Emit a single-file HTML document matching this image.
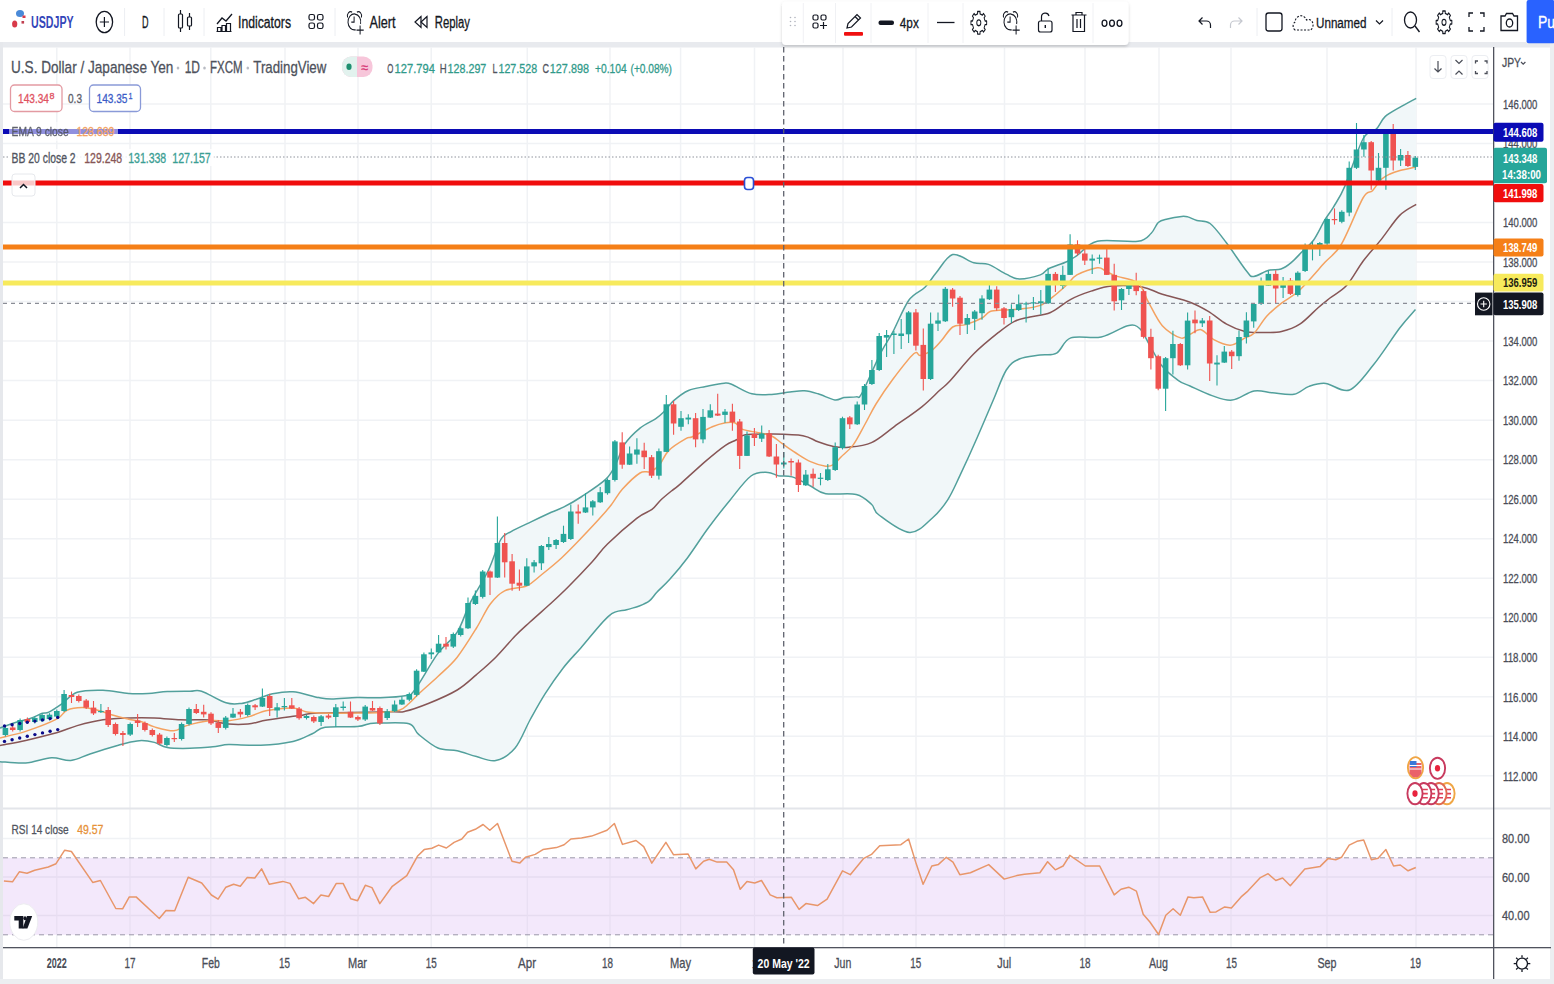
<!DOCTYPE html>
<html><head><meta charset="utf-8"><style>html,body{margin:0;padding:0;background:#fff;overflow:hidden;width:1554px;height:984px;}svg{display:block;}</style></head><body>
<svg width="1554" height="984" viewBox="0 0 1554 984" font-family='"Liberation Sans", sans-serif'>
<rect x="0" y="0" width="1554" height="984" fill="#ffffff"/>
<rect x="0" y="41.5" width="1554" height="6" fill="#e8eaee"/>
<rect x="0" y="42" width="3" height="942" fill="#e6e8ec"/>
<rect x="1550" y="42" width="4" height="942" fill="#eceef1"/>
<rect x="0" y="979" width="1554" height="5" fill="#eceef1"/>
<line x1="3" y1="104.0" x2="1493" y2="104.0" stroke="#f0f2f5" stroke-width="1.5"/>
<line x1="3" y1="143.5" x2="1493" y2="143.5" stroke="#f0f2f5" stroke-width="1.5"/>
<line x1="3" y1="183.0" x2="1493" y2="183.0" stroke="#f0f2f5" stroke-width="1.5"/>
<line x1="3" y1="222.6" x2="1493" y2="222.6" stroke="#f0f2f5" stroke-width="1.5"/>
<line x1="3" y1="262.1" x2="1493" y2="262.1" stroke="#f0f2f5" stroke-width="1.5"/>
<line x1="3" y1="301.6" x2="1493" y2="301.6" stroke="#f0f2f5" stroke-width="1.5"/>
<line x1="3" y1="341.1" x2="1493" y2="341.1" stroke="#f0f2f5" stroke-width="1.5"/>
<line x1="3" y1="380.6" x2="1493" y2="380.6" stroke="#f0f2f5" stroke-width="1.5"/>
<line x1="3" y1="420.2" x2="1493" y2="420.2" stroke="#f0f2f5" stroke-width="1.5"/>
<line x1="3" y1="459.7" x2="1493" y2="459.7" stroke="#f0f2f5" stroke-width="1.5"/>
<line x1="3" y1="499.2" x2="1493" y2="499.2" stroke="#f0f2f5" stroke-width="1.5"/>
<line x1="3" y1="538.7" x2="1493" y2="538.7" stroke="#f0f2f5" stroke-width="1.5"/>
<line x1="3" y1="578.2" x2="1493" y2="578.2" stroke="#f0f2f5" stroke-width="1.5"/>
<line x1="3" y1="617.8" x2="1493" y2="617.8" stroke="#f0f2f5" stroke-width="1.5"/>
<line x1="3" y1="657.3" x2="1493" y2="657.3" stroke="#f0f2f5" stroke-width="1.5"/>
<line x1="3" y1="696.8" x2="1493" y2="696.8" stroke="#f0f2f5" stroke-width="1.5"/>
<line x1="3" y1="736.3" x2="1493" y2="736.3" stroke="#f0f2f5" stroke-width="1.5"/>
<line x1="3" y1="775.8" x2="1493" y2="775.8" stroke="#f0f2f5" stroke-width="1.5"/>
<line x1="56.8" y1="47" x2="56.8" y2="947" stroke="#f0f2f5" stroke-width="1.5"/>
<line x1="130" y1="47" x2="130" y2="947" stroke="#f0f2f5" stroke-width="1.5"/>
<line x1="210.8" y1="47" x2="210.8" y2="947" stroke="#f0f2f5" stroke-width="1.5"/>
<line x1="285" y1="47" x2="285" y2="947" stroke="#f0f2f5" stroke-width="1.5"/>
<line x1="358" y1="47" x2="358" y2="947" stroke="#f0f2f5" stroke-width="1.5"/>
<line x1="431.2" y1="47" x2="431.2" y2="947" stroke="#f0f2f5" stroke-width="1.5"/>
<line x1="527.3" y1="47" x2="527.3" y2="947" stroke="#f0f2f5" stroke-width="1.5"/>
<line x1="610" y1="47" x2="610" y2="947" stroke="#f0f2f5" stroke-width="1.5"/>
<line x1="680.6" y1="47" x2="680.6" y2="947" stroke="#f0f2f5" stroke-width="1.5"/>
<line x1="754.5" y1="47" x2="754.5" y2="947" stroke="#f0f2f5" stroke-width="1.5"/>
<line x1="843" y1="47" x2="843" y2="947" stroke="#f0f2f5" stroke-width="1.5"/>
<line x1="916" y1="47" x2="916" y2="947" stroke="#f0f2f5" stroke-width="1.5"/>
<line x1="1004.5" y1="47" x2="1004.5" y2="947" stroke="#f0f2f5" stroke-width="1.5"/>
<line x1="1085" y1="47" x2="1085" y2="947" stroke="#f0f2f5" stroke-width="1.5"/>
<line x1="1159" y1="47" x2="1159" y2="947" stroke="#f0f2f5" stroke-width="1.5"/>
<line x1="1231" y1="47" x2="1231" y2="947" stroke="#f0f2f5" stroke-width="1.5"/>
<line x1="1327" y1="47" x2="1327" y2="947" stroke="#f0f2f5" stroke-width="1.5"/>
<line x1="1416" y1="47" x2="1416" y2="947" stroke="#f0f2f5" stroke-width="1.5"/>
<line x1="3" y1="838.5" x2="1493" y2="838.5" stroke="#f0f2f5" stroke-width="1.5"/>
<line x1="3" y1="877.0" x2="1493" y2="877.0" stroke="#f0f2f5" stroke-width="1.5"/>
<line x1="3" y1="915.5" x2="1493" y2="915.5" stroke="#f0f2f5" stroke-width="1.5"/>
<path d="M0.0,728.0 C2.8,727.0 11.9,723.6 17.0,722.0 C22.1,720.4 26.7,719.7 30.9,718.2 C35.1,716.8 39.3,714.3 42.3,713.3 C45.3,712.3 45.5,713.7 48.8,712.1 C52.0,710.5 57.1,707.1 61.8,703.8 C66.5,700.5 70.3,694.5 77.2,692.2 C84.1,689.9 94.4,690.0 103.0,690.2 C111.6,690.4 121.2,693.0 128.7,693.5 C136.2,694.0 141.6,693.8 148.0,693.5 C154.4,693.2 160.3,691.9 167.3,691.5 C174.3,691.1 184.3,691.2 190.0,691.2 C195.7,691.2 195.6,689.3 201.6,691.2 C207.6,693.1 219.3,700.8 226.0,702.8 C232.7,704.8 236.3,704.0 241.5,703.4 C246.7,702.8 251.8,700.6 257.0,699.0 C262.1,697.4 266.4,695.0 272.4,693.8 C278.4,692.6 285.3,691.2 293.0,691.8 C300.7,692.4 312.3,696.4 318.7,697.6 C325.1,698.8 325.2,699.0 331.6,699.0 C338.0,699.0 348.9,697.8 357.0,697.6 C365.1,697.4 372.0,698.1 380.0,697.8 C388.0,697.5 399.2,697.1 405.0,695.8 C410.8,694.5 409.2,697.1 414.7,690.0 C420.2,682.9 430.8,663.0 437.9,653.4 C445.0,643.8 451.8,640.5 457.2,632.1 C462.6,623.7 464.8,613.5 470.0,603.2 C475.2,592.9 483.2,581.0 488.3,570.5 C493.4,560.0 496.8,546.5 500.5,540.0 C504.2,533.5 505.6,534.8 510.7,531.8 C515.8,528.8 524.2,525.1 531.0,521.9 C537.8,518.6 545.9,514.8 551.3,512.3 C556.7,509.8 558.4,509.8 563.5,507.2 C568.6,504.6 574.7,501.2 581.8,496.5 C588.9,491.8 600.4,484.5 606.2,478.9 C612.0,473.3 613.4,468.4 616.4,462.7 C619.4,456.9 620.6,450.2 624.5,444.4 C628.4,438.6 634.8,432.4 640.0,428.1 C645.2,423.9 651.6,421.5 655.5,418.9 C659.4,416.3 660.3,415.4 663.4,412.3 C666.5,409.2 669.8,404.0 674.0,400.4 C678.2,396.8 683.2,392.8 688.5,390.5 C693.8,388.2 699.8,387.7 705.7,386.5 C711.7,385.3 719.8,383.5 724.2,383.2 C728.6,382.9 727.5,382.7 732.1,384.5 C736.7,386.3 745.3,392.2 751.9,393.8 C758.5,395.4 765.4,394.7 771.7,394.4 C778.1,394.1 784.5,392.6 790.0,392.0 C795.5,391.4 799.7,390.5 804.4,390.8 C809.1,391.1 813.0,392.3 818.1,393.8 C823.2,395.3 830.6,399.3 834.9,399.9 C839.2,400.5 840.5,398.1 844.0,397.6 C847.5,397.1 853.2,397.7 856.2,396.9 C859.2,396.1 857.9,400.4 862.0,393.0 C866.1,385.6 876.0,362.2 881.1,352.2 C886.2,342.1 887.9,341.4 892.5,332.7 C897.1,324.0 903.4,307.8 908.8,300.2 C914.2,292.6 920.4,291.8 925.0,287.2 C929.6,282.6 931.8,277.9 936.4,272.5 C941.0,267.1 946.5,256.2 952.7,254.6 C958.9,253.0 967.8,261.2 973.8,262.8 C979.8,264.4 983.1,262.5 988.5,264.4 C993.9,266.3 1001.2,271.7 1006.3,274.1 C1011.4,276.5 1013.6,278.9 1019.3,279.0 C1025.0,279.1 1035.4,276.6 1040.3,274.9 C1045.2,273.2 1044.1,271.0 1048.5,268.8 C1052.9,266.6 1062.0,263.9 1066.7,261.7 C1071.4,259.5 1071.8,259.0 1076.9,255.6 C1082.0,252.2 1087.0,243.7 1097.2,241.3 C1107.4,238.9 1128.9,242.7 1137.9,241.3 C1146.9,240.0 1147.8,236.3 1151.2,233.2 C1154.6,230.1 1155.6,224.9 1158.3,222.5 C1161.0,220.1 1163.5,220.0 1167.4,219.0 C1171.3,218.0 1178.3,216.8 1181.7,216.4 C1185.1,216.1 1185.3,216.2 1187.8,216.9 C1190.3,217.6 1193.2,219.4 1196.9,220.5 C1200.6,221.6 1205.2,219.8 1210.1,223.5 C1215.0,227.2 1220.3,234.8 1226.4,242.8 C1232.5,250.8 1242.1,265.7 1246.7,271.3 C1251.3,276.9 1250.1,276.6 1253.8,276.4 C1257.5,276.2 1264.2,271.4 1268.7,270.2 C1273.2,269.0 1277.2,270.3 1281.0,269.0 C1284.8,267.7 1287.7,265.5 1291.2,262.6 C1294.8,259.7 1298.6,255.2 1302.3,251.5 C1306.0,247.8 1309.8,245.5 1313.5,240.3 C1317.2,235.1 1321.4,225.8 1324.7,220.2 C1328.0,214.6 1330.2,212.5 1333.6,206.8 C1337.0,201.1 1340.0,197.5 1344.9,186.1 C1349.8,174.7 1358.0,147.9 1363.2,138.5 C1368.4,129.1 1372.3,133.1 1376.0,129.4 C1379.7,125.8 1381.1,120.3 1385.1,116.6 C1389.0,112.9 1394.5,110.5 1399.7,107.4 C1404.9,104.4 1413.5,99.8 1416.2,98.3 L1415.5,309.5 1415.5,309.5 C1412.9,312.6 1406.7,318.8 1399.7,328.0 C1392.7,337.2 1381.7,354.7 1373.3,365.0 C1364.9,375.3 1357.4,386.9 1349.5,390.0 C1341.6,393.1 1332.5,384.0 1325.7,383.4 C1319.0,382.8 1314.3,384.6 1309.0,386.4 C1303.7,388.2 1300.1,393.2 1294.0,394.3 C1287.9,395.4 1279.1,393.4 1272.4,392.8 C1265.7,392.2 1260.7,389.8 1254.0,391.0 C1247.3,392.2 1239.1,399.3 1232.1,400.1 C1225.1,400.9 1219.0,398.0 1212.0,395.6 C1205.0,393.2 1195.6,388.5 1190.0,386.0 C1184.4,383.5 1183.1,383.9 1178.5,380.6 C1173.9,377.3 1167.0,372.1 1162.3,366.3 C1157.6,360.5 1153.8,352.3 1150.1,346.0 C1146.4,339.7 1143.6,332.1 1139.9,328.7 C1136.2,325.3 1134.1,324.3 1127.7,325.7 C1121.3,327.1 1110.8,334.9 1101.3,336.9 C1091.8,338.9 1078.2,335.2 1070.8,337.9 C1063.3,340.6 1061.7,350.2 1056.6,353.1 C1051.5,356.0 1046.2,354.0 1040.0,355.0 C1033.8,356.0 1024.9,356.5 1019.3,359.0 C1013.7,361.5 1010.6,363.2 1006.3,370.0 C1002.0,376.8 998.2,388.7 993.3,400.0 C988.4,411.3 982.5,425.4 977.0,438.0 C971.5,450.6 964.9,465.1 960.0,475.4 C955.1,485.7 952.3,492.7 947.7,499.8 C943.1,506.9 938.8,512.5 932.4,518.0 C926.0,523.5 918.5,533.0 909.6,532.5 C900.7,532.0 885.4,519.7 879.0,515.0 C872.6,510.3 875.3,507.7 871.5,504.3 C867.7,500.9 863.8,496.2 856.2,494.4 C848.6,492.6 833.3,495.1 825.7,493.7 C818.1,492.3 816.1,488.8 810.5,486.0 C804.9,483.2 797.6,478.6 792.2,476.9 C786.8,475.2 782.4,476.4 778.3,475.7 C774.2,474.9 772.3,472.3 767.8,472.4 C763.2,472.4 757.3,471.4 751.0,476.0 C744.7,480.6 737.2,491.4 730.0,500.2 C722.8,508.9 715.0,518.9 707.9,528.5 C700.8,538.1 694.0,549.2 687.6,557.7 C681.2,566.2 674.9,573.6 669.8,579.3 C664.7,585.0 660.5,588.4 657.1,592.0 C653.7,595.6 652.4,598.6 649.4,600.9 C646.4,603.2 643.1,604.5 639.3,606.0 C635.5,607.5 631.6,608.2 626.6,609.8 C621.6,611.4 616.6,609.4 609.0,615.8 C601.4,622.1 588.5,639.2 580.8,647.9 C573.1,656.6 568.9,660.6 563.0,668.2 C557.1,675.8 550.7,685.0 545.2,693.6 C539.7,702.2 535.0,710.9 530.0,720.0 C525.0,729.1 520.8,741.2 515.1,748.0 C509.4,754.8 502.2,759.1 495.8,760.5 C489.4,761.9 482.9,758.2 476.5,756.6 C470.1,755.0 463.6,752.2 457.2,750.8 C450.8,749.4 444.3,750.7 437.9,748.0 C431.5,745.3 423.4,738.4 418.6,734.4 C413.8,730.4 415.4,725.7 409.0,723.8 C402.6,721.9 386.5,723.1 380.0,723.0 C373.5,722.9 374.0,722.8 370.2,723.4 C366.4,724.0 364.8,726.0 357.3,726.6 C349.8,727.2 332.6,726.0 325.1,727.2 C317.6,728.4 317.7,731.3 312.3,733.7 C306.9,736.1 301.6,739.5 293.0,741.4 C284.4,743.3 271.5,744.7 260.8,745.2 C250.1,745.7 236.1,744.4 228.6,744.6 C221.1,744.8 222.1,745.9 215.7,746.5 C209.3,747.1 198.1,748.1 190.0,748.3 C181.9,748.5 173.2,748.5 167.3,747.5 C161.4,746.5 158.7,743.6 154.4,742.4 C150.1,741.2 145.9,740.4 141.6,740.4 C137.3,740.4 133.0,741.5 128.7,742.4 C124.4,743.3 122.2,744.1 115.8,746.0 C109.3,747.9 97.5,751.6 90.0,754.0 C82.5,756.4 77.2,759.8 70.8,760.4 C64.4,761.0 59.0,757.4 51.5,757.8 C44.0,758.2 34.3,762.4 25.7,763.0 C17.1,763.6 4.3,761.9 0.0,761.7 Z" fill="#f1f7f9" stroke="none"/>
<path d="M0.0,728.0 C2.8,727.0 11.9,723.6 17.0,722.0 C22.1,720.4 26.7,719.7 30.9,718.2 C35.1,716.8 39.3,714.3 42.3,713.3 C45.3,712.3 45.5,713.7 48.8,712.1 C52.0,710.5 57.1,707.1 61.8,703.8 C66.5,700.5 70.3,694.5 77.2,692.2 C84.1,689.9 94.4,690.0 103.0,690.2 C111.6,690.4 121.2,693.0 128.7,693.5 C136.2,694.0 141.6,693.8 148.0,693.5 C154.4,693.2 160.3,691.9 167.3,691.5 C174.3,691.1 184.3,691.2 190.0,691.2 C195.7,691.2 195.6,689.3 201.6,691.2 C207.6,693.1 219.3,700.8 226.0,702.8 C232.7,704.8 236.3,704.0 241.5,703.4 C246.7,702.8 251.8,700.6 257.0,699.0 C262.1,697.4 266.4,695.0 272.4,693.8 C278.4,692.6 285.3,691.2 293.0,691.8 C300.7,692.4 312.3,696.4 318.7,697.6 C325.1,698.8 325.2,699.0 331.6,699.0 C338.0,699.0 348.9,697.8 357.0,697.6 C365.1,697.4 372.0,698.1 380.0,697.8 C388.0,697.5 399.2,697.1 405.0,695.8 C410.8,694.5 409.2,697.1 414.7,690.0 C420.2,682.9 430.8,663.0 437.9,653.4 C445.0,643.8 451.8,640.5 457.2,632.1 C462.6,623.7 464.8,613.5 470.0,603.2 C475.2,592.9 483.2,581.0 488.3,570.5 C493.4,560.0 496.8,546.5 500.5,540.0 C504.2,533.5 505.6,534.8 510.7,531.8 C515.8,528.8 524.2,525.1 531.0,521.9 C537.8,518.6 545.9,514.8 551.3,512.3 C556.7,509.8 558.4,509.8 563.5,507.2 C568.6,504.6 574.7,501.2 581.8,496.5 C588.9,491.8 600.4,484.5 606.2,478.9 C612.0,473.3 613.4,468.4 616.4,462.7 C619.4,456.9 620.6,450.2 624.5,444.4 C628.4,438.6 634.8,432.4 640.0,428.1 C645.2,423.9 651.6,421.5 655.5,418.9 C659.4,416.3 660.3,415.4 663.4,412.3 C666.5,409.2 669.8,404.0 674.0,400.4 C678.2,396.8 683.2,392.8 688.5,390.5 C693.8,388.2 699.8,387.7 705.7,386.5 C711.7,385.3 719.8,383.5 724.2,383.2 C728.6,382.9 727.5,382.7 732.1,384.5 C736.7,386.3 745.3,392.2 751.9,393.8 C758.5,395.4 765.4,394.7 771.7,394.4 C778.1,394.1 784.5,392.6 790.0,392.0 C795.5,391.4 799.7,390.5 804.4,390.8 C809.1,391.1 813.0,392.3 818.1,393.8 C823.2,395.3 830.6,399.3 834.9,399.9 C839.2,400.5 840.5,398.1 844.0,397.6 C847.5,397.1 853.2,397.7 856.2,396.9 C859.2,396.1 857.9,400.4 862.0,393.0 C866.1,385.6 876.0,362.2 881.1,352.2 C886.2,342.1 887.9,341.4 892.5,332.7 C897.1,324.0 903.4,307.8 908.8,300.2 C914.2,292.6 920.4,291.8 925.0,287.2 C929.6,282.6 931.8,277.9 936.4,272.5 C941.0,267.1 946.5,256.2 952.7,254.6 C958.9,253.0 967.8,261.2 973.8,262.8 C979.8,264.4 983.1,262.5 988.5,264.4 C993.9,266.3 1001.2,271.7 1006.3,274.1 C1011.4,276.5 1013.6,278.9 1019.3,279.0 C1025.0,279.1 1035.4,276.6 1040.3,274.9 C1045.2,273.2 1044.1,271.0 1048.5,268.8 C1052.9,266.6 1062.0,263.9 1066.7,261.7 C1071.4,259.5 1071.8,259.0 1076.9,255.6 C1082.0,252.2 1087.0,243.7 1097.2,241.3 C1107.4,238.9 1128.9,242.7 1137.9,241.3 C1146.9,240.0 1147.8,236.3 1151.2,233.2 C1154.6,230.1 1155.6,224.9 1158.3,222.5 C1161.0,220.1 1163.5,220.0 1167.4,219.0 C1171.3,218.0 1178.3,216.8 1181.7,216.4 C1185.1,216.1 1185.3,216.2 1187.8,216.9 C1190.3,217.6 1193.2,219.4 1196.9,220.5 C1200.6,221.6 1205.2,219.8 1210.1,223.5 C1215.0,227.2 1220.3,234.8 1226.4,242.8 C1232.5,250.8 1242.1,265.7 1246.7,271.3 C1251.3,276.9 1250.1,276.6 1253.8,276.4 C1257.5,276.2 1264.2,271.4 1268.7,270.2 C1273.2,269.0 1277.2,270.3 1281.0,269.0 C1284.8,267.7 1287.7,265.5 1291.2,262.6 C1294.8,259.7 1298.6,255.2 1302.3,251.5 C1306.0,247.8 1309.8,245.5 1313.5,240.3 C1317.2,235.1 1321.4,225.8 1324.7,220.2 C1328.0,214.6 1330.2,212.5 1333.6,206.8 C1337.0,201.1 1340.0,197.5 1344.9,186.1 C1349.8,174.7 1358.0,147.9 1363.2,138.5 C1368.4,129.1 1372.3,133.1 1376.0,129.4 C1379.7,125.8 1381.1,120.3 1385.1,116.6 C1389.0,112.9 1394.5,110.5 1399.7,107.4 C1404.9,104.4 1413.5,99.8 1416.2,98.3" fill="none" stroke="#52a09c" stroke-width="1.5" stroke-linejoin="round"/>
<path d="M0.0,761.7 C4.3,761.9 17.1,763.6 25.7,763.0 C34.3,762.4 44.0,758.2 51.5,757.8 C59.0,757.4 64.4,761.0 70.8,760.4 C77.2,759.8 82.5,756.4 90.0,754.0 C97.5,751.6 109.3,747.9 115.8,746.0 C122.2,744.1 124.4,743.3 128.7,742.4 C133.0,741.5 137.3,740.4 141.6,740.4 C145.9,740.4 150.1,741.2 154.4,742.4 C158.7,743.6 161.4,746.5 167.3,747.5 C173.2,748.5 181.9,748.5 190.0,748.3 C198.1,748.1 209.3,747.1 215.7,746.5 C222.1,745.9 221.1,744.8 228.6,744.6 C236.1,744.4 250.1,745.7 260.8,745.2 C271.5,744.7 284.4,743.3 293.0,741.4 C301.6,739.5 306.9,736.1 312.3,733.7 C317.7,731.3 317.6,728.4 325.1,727.2 C332.6,726.0 349.8,727.2 357.3,726.6 C364.8,726.0 366.4,724.0 370.2,723.4 C374.0,722.8 373.5,722.9 380.0,723.0 C386.5,723.1 402.6,721.9 409.0,723.8 C415.4,725.7 413.8,730.4 418.6,734.4 C423.4,738.4 431.5,745.3 437.9,748.0 C444.3,750.7 450.8,749.4 457.2,750.8 C463.6,752.2 470.1,755.0 476.5,756.6 C482.9,758.2 489.4,761.9 495.8,760.5 C502.2,759.1 509.4,754.8 515.1,748.0 C520.8,741.2 525.0,729.1 530.0,720.0 C535.0,710.9 539.7,702.2 545.2,693.6 C550.7,685.0 557.1,675.8 563.0,668.2 C568.9,660.6 573.1,656.6 580.8,647.9 C588.5,639.2 601.4,622.1 609.0,615.8 C616.6,609.4 621.6,611.4 626.6,609.8 C631.6,608.2 635.5,607.5 639.3,606.0 C643.1,604.5 646.4,603.2 649.4,600.9 C652.4,598.6 653.7,595.6 657.1,592.0 C660.5,588.4 664.7,585.0 669.8,579.3 C674.9,573.6 681.2,566.2 687.6,557.7 C694.0,549.2 700.8,538.1 707.9,528.5 C715.0,518.9 722.8,508.9 730.0,500.2 C737.2,491.4 744.7,480.6 751.0,476.0 C757.3,471.4 763.2,472.4 767.8,472.4 C772.3,472.3 774.2,474.9 778.3,475.7 C782.4,476.4 786.8,475.2 792.2,476.9 C797.6,478.6 804.9,483.2 810.5,486.0 C816.1,488.8 818.1,492.3 825.7,493.7 C833.3,495.1 848.6,492.6 856.2,494.4 C863.8,496.2 867.7,500.9 871.5,504.3 C875.3,507.7 872.6,510.3 879.0,515.0 C885.4,519.7 900.7,532.0 909.6,532.5 C918.5,533.0 926.0,523.5 932.4,518.0 C938.8,512.5 943.1,506.9 947.7,499.8 C952.3,492.7 955.1,485.7 960.0,475.4 C964.9,465.1 971.5,450.6 977.0,438.0 C982.5,425.4 988.4,411.3 993.3,400.0 C998.2,388.7 1002.0,376.8 1006.3,370.0 C1010.6,363.2 1013.7,361.5 1019.3,359.0 C1024.9,356.5 1033.8,356.0 1040.0,355.0 C1046.2,354.0 1051.5,356.0 1056.6,353.1 C1061.7,350.2 1063.3,340.6 1070.8,337.9 C1078.2,335.2 1091.8,338.9 1101.3,336.9 C1110.8,334.9 1121.3,327.1 1127.7,325.7 C1134.1,324.3 1136.2,325.3 1139.9,328.7 C1143.6,332.1 1146.4,339.7 1150.1,346.0 C1153.8,352.3 1157.6,360.5 1162.3,366.3 C1167.0,372.1 1173.9,377.3 1178.5,380.6 C1183.1,383.9 1184.4,383.5 1190.0,386.0 C1195.6,388.5 1205.0,393.2 1212.0,395.6 C1219.0,398.0 1225.1,400.9 1232.1,400.1 C1239.1,399.3 1247.3,392.2 1254.0,391.0 C1260.7,389.8 1265.7,392.2 1272.4,392.8 C1279.1,393.4 1287.9,395.4 1294.0,394.3 C1300.1,393.2 1303.7,388.2 1309.0,386.4 C1314.3,384.6 1319.0,382.8 1325.7,383.4 C1332.5,384.0 1341.6,393.1 1349.5,390.0 C1357.4,386.9 1364.9,375.3 1373.3,365.0 C1381.7,354.7 1392.7,337.2 1399.7,328.0 C1406.7,318.8 1412.9,312.6 1415.5,309.5" fill="none" stroke="#52a09c" stroke-width="1.5" stroke-linejoin="round"/>
<path d="M0.0,745.6 C4.3,744.7 16.3,742.5 25.7,740.4 C35.1,738.2 48.0,735.2 56.6,732.7 C65.2,730.2 69.5,727.8 77.2,725.6 C84.9,723.5 94.4,721.1 103.0,719.8 C111.6,718.5 120.1,718.2 128.7,717.9 C137.3,717.6 145.8,717.6 154.4,717.9 C163.0,718.2 172.6,719.5 180.2,719.8 C187.8,720.1 195.2,719.8 200.0,719.8 C204.8,719.8 204.5,719.4 209.3,720.1 C214.1,720.8 222.2,723.4 228.6,724.0 C235.0,724.6 241.5,724.6 247.9,724.0 C254.3,723.4 258.6,721.5 267.2,720.1 C275.8,718.7 290.8,716.8 299.4,715.6 C308.0,714.4 303.6,713.6 318.7,713.0 C333.8,712.4 375.6,712.1 390.0,711.8 C404.4,711.5 398.6,712.7 405.0,711.3 C411.4,709.9 419.6,707.0 428.3,703.5 C437.0,700.0 449.2,694.8 457.2,690.0 C465.2,685.2 470.1,680.1 476.5,674.6 C482.9,669.1 489.4,663.6 495.8,657.2 C502.2,650.8 509.4,641.9 515.1,636.0 C520.8,630.1 524.0,627.5 530.0,622.0 C536.0,616.5 544.9,608.8 551.3,603.0 C557.6,597.2 561.3,593.8 568.1,587.0 C574.9,580.2 585.4,569.2 592.0,562.0 C598.6,554.8 600.0,551.3 607.5,544.0 C615.0,536.7 629.3,524.1 636.7,518.3 C644.1,512.5 648.0,512.4 652.0,509.4 C656.0,506.3 657.4,503.2 660.8,500.0 C664.2,496.8 669.2,492.8 672.3,490.3 C675.4,487.8 673.7,489.8 679.3,484.9 C684.9,480.0 698.0,467.7 705.7,461.1 C713.4,454.5 720.4,448.8 725.5,445.3 C730.6,441.8 732.8,441.8 736.1,440.0 C739.4,438.2 739.4,435.7 745.3,434.7 C751.2,433.7 762.1,433.8 771.7,434.0 C781.3,434.2 795.2,434.4 802.9,435.7 C810.6,437.0 813.0,440.0 818.1,441.8 C823.2,443.6 828.3,445.5 833.4,446.4 C838.5,447.3 842.2,447.8 848.6,447.2 C855.0,446.6 863.9,446.0 871.5,442.6 C879.1,439.2 885.9,432.6 894.3,426.6 C902.7,420.6 914.2,412.9 921.8,406.8 C929.4,400.7 935.4,394.2 940.0,390.0 C944.6,385.8 943.8,387.5 949.4,381.5 C955.0,375.5 965.7,361.9 973.8,353.8 C981.9,345.7 991.4,338.1 998.2,332.7 C1005.0,327.3 1009.2,323.9 1014.5,321.3 C1019.8,318.7 1024.0,318.5 1030.0,317.0 C1036.0,315.5 1043.7,315.4 1050.5,312.5 C1057.3,309.6 1064.0,302.9 1070.8,299.3 C1077.6,295.7 1084.3,293.3 1091.1,291.1 C1097.9,288.9 1103.0,286.7 1111.5,286.0 C1120.0,285.3 1133.5,285.6 1142.0,287.0 C1150.5,288.4 1154.3,291.7 1162.3,294.2 C1170.3,296.7 1182.3,299.3 1190.0,302.2 C1197.7,305.1 1202.2,307.7 1208.3,311.4 C1214.4,315.1 1220.5,320.8 1226.6,324.2 C1232.7,327.6 1238.8,330.1 1244.9,331.5 C1251.0,332.9 1257.1,332.4 1263.2,332.4 C1269.3,332.4 1275.4,332.9 1281.5,331.5 C1287.6,330.1 1293.7,328.2 1299.8,324.2 C1305.9,320.2 1313.1,312.1 1318.1,307.7 C1323.1,303.3 1325.2,301.8 1330.0,298.0 C1334.8,294.2 1341.5,291.2 1347.0,285.0 C1352.5,278.8 1357.5,268.6 1363.2,261.0 C1369.0,253.3 1375.4,246.7 1381.5,239.1 C1387.6,231.5 1393.9,221.2 1399.7,215.4 C1405.5,209.6 1413.5,206.2 1416.2,204.4" fill="none" stroke="#875656" stroke-width="1.5" stroke-linejoin="round"/>
<path d="M0.0,737.9 C4.3,736.8 16.3,734.5 25.7,731.4 C35.1,728.3 49.7,722.7 56.6,719.2 C63.5,715.7 62.6,712.1 66.9,710.2 C71.2,708.3 77.2,707.6 82.4,707.6 C87.6,707.6 92.7,708.9 97.8,710.2 C102.9,711.5 108.2,713.8 113.3,715.3 C118.4,716.8 124.0,718.1 128.7,719.2 C133.4,720.3 137.3,720.5 141.6,721.8 C145.9,723.1 149.1,725.4 154.4,726.9 C159.8,728.4 168.3,731.0 173.7,730.8 C179.1,730.6 180.7,727.3 186.6,725.6 C192.5,723.9 202.3,721.6 209.3,720.8 C216.3,720.0 222.2,721.4 228.6,720.8 C235.0,720.1 241.5,718.6 247.9,716.9 C254.3,715.2 259.7,712.0 267.2,710.5 C274.7,709.0 286.6,707.8 293.0,708.0 C299.4,708.2 301.5,711.0 305.8,711.8 C310.1,712.6 310.1,712.8 318.7,713.0 C327.3,713.2 347.1,713.1 357.3,713.0 C367.5,712.9 373.0,713.0 380.0,712.5 C387.0,712.0 394.5,711.8 399.3,710.3 C404.1,708.8 405.8,706.2 409.0,703.5 C412.2,700.8 413.8,698.4 418.6,693.9 C423.4,689.4 431.5,682.6 437.9,676.5 C444.3,670.4 450.8,665.3 457.2,657.2 C463.6,649.1 471.0,636.9 476.5,628.0 C482.0,619.1 485.6,610.2 490.3,604.0 C495.0,597.8 498.5,593.8 504.6,590.8 C510.7,587.8 520.8,588.3 526.9,585.7 C533.0,583.1 535.4,579.6 541.2,575.0 C547.0,570.4 554.9,564.1 561.5,558.0 C568.1,551.9 574.0,545.7 580.8,538.6 C587.6,531.5 597.0,521.5 602.2,515.6 C607.5,509.7 608.9,507.8 612.3,503.4 C615.7,499.0 617.9,494.2 622.5,489.1 C627.1,484.0 635.4,475.9 640.0,473.0 C644.6,470.1 647.0,473.0 650.2,471.7 C653.4,470.4 656.3,468.6 659.4,465.1 C662.5,461.6 664.3,455.0 668.7,450.6 C673.1,446.2 681.9,441.0 685.9,438.7 C689.9,436.4 688.1,438.7 692.5,436.7 C696.9,434.7 706.8,429.1 712.3,426.8 C717.8,424.5 721.8,423.5 725.5,422.8 C729.2,422.1 731.8,421.7 734.7,422.8 C737.6,423.9 738.7,427.8 742.7,429.4 C746.7,431.0 753.7,431.6 758.5,432.7 C763.3,433.8 767.8,434.2 771.7,436.0 C775.6,437.8 778.1,440.6 782.0,443.4 C785.9,446.1 790.5,449.5 795.2,452.5 C800.0,455.5 805.4,459.3 810.5,461.6 C815.6,463.9 821.9,465.7 825.7,466.2 C829.5,466.7 830.9,466.2 833.4,464.7 C835.9,463.2 837.7,460.3 841.0,457.0 C844.3,453.7 849.1,450.5 853.2,444.9 C857.3,439.3 861.6,430.3 865.4,423.5 C869.2,416.7 871.5,411.3 876.0,404.0 C880.5,396.7 886.2,388.2 892.5,379.8 C898.8,371.4 909.1,357.9 913.7,353.8 C918.3,349.7 917.2,355.9 920.2,355.4 C923.2,354.9 928.0,353.0 931.5,350.6 C935.0,348.2 937.8,344.7 941.3,340.8 C944.8,336.9 948.6,329.7 952.7,327.0 C956.8,324.3 960.8,326.1 965.7,324.6 C970.6,323.1 977.9,320.2 982.0,318.0 C986.1,315.8 986.6,312.8 990.1,311.5 C993.6,310.2 997.7,310.4 1003.1,310.0 C1008.5,309.6 1016.4,309.6 1022.6,308.8 C1028.8,308.0 1035.3,307.3 1040.3,305.4 C1045.3,303.5 1048.1,300.6 1052.5,297.2 C1056.9,293.8 1062.6,288.7 1066.7,285.0 C1070.8,281.3 1071.8,277.8 1076.9,274.9 C1082.0,272.0 1092.5,268.5 1097.2,267.8 C1102.0,267.1 1102.4,269.5 1105.4,270.8 C1108.5,272.1 1110.1,273.9 1115.5,275.9 C1120.9,277.9 1132.5,278.8 1137.9,283.0 C1143.3,287.2 1143.9,294.2 1148.0,301.3 C1152.1,308.4 1156.9,319.6 1162.3,325.7 C1167.7,331.8 1176.0,336.5 1180.6,337.9 C1185.2,339.3 1186.6,335.7 1190.0,334.3 C1193.4,332.9 1197.0,328.8 1201.0,329.7 C1205.0,330.6 1208.9,337.1 1213.8,339.7 C1218.7,342.3 1225.1,345.5 1230.3,345.2 C1235.5,344.9 1241.0,339.9 1244.9,337.9 C1248.9,335.9 1250.3,336.9 1254.0,333.3 C1257.7,329.7 1262.3,321.0 1266.9,316.0 C1271.5,311.0 1276.0,307.4 1281.5,303.1 C1287.0,298.8 1292.6,296.8 1299.8,290.0 C1307.0,283.2 1317.8,270.3 1324.7,262.6 C1331.7,254.9 1335.1,254.8 1341.5,244.0 C1347.9,233.2 1357.8,206.9 1363.0,198.0 C1368.2,189.1 1369.5,193.8 1372.5,190.7 C1375.5,187.6 1378.1,182.3 1381.0,179.5 C1383.9,176.7 1386.8,175.5 1390.0,174.0 C1393.2,172.5 1395.7,171.7 1400.0,170.5 C1404.3,169.3 1413.3,167.6 1416.0,167.0" fill="none" stroke="#f4a261" stroke-width="1.5" stroke-linejoin="round"/>
<line x1="5.4" y1="726.5" x2="5.4" y2="736.5" stroke="#26a69a" stroke-width="1.1"/>
<rect x="2.6" y="728.0" width="5.6" height="7.0" fill="#26a69a"/>
<line x1="12.7" y1="726.0" x2="12.7" y2="731.5" stroke="#ef5350" stroke-width="1.1"/>
<rect x="9.9" y="727.5" width="5.6" height="2.5" fill="#ef5350"/>
<line x1="20.1" y1="718.5" x2="20.1" y2="731.5" stroke="#26a69a" stroke-width="1.1"/>
<rect x="17.3" y="720.0" width="5.6" height="10.0" fill="#26a69a"/>
<line x1="27.4" y1="717.5" x2="27.4" y2="723.5" stroke="#ef5350" stroke-width="1.1"/>
<rect x="24.6" y="719.0" width="5.6" height="3.0" fill="#ef5350"/>
<line x1="34.8" y1="716.5" x2="34.8" y2="723.5" stroke="#26a69a" stroke-width="1.1"/>
<rect x="32.0" y="718.0" width="5.6" height="4.0" fill="#26a69a"/>
<line x1="42.1" y1="713.5" x2="42.1" y2="722.0" stroke="#26a69a" stroke-width="1.1"/>
<rect x="39.3" y="715.0" width="5.6" height="5.5" fill="#26a69a"/>
<line x1="49.5" y1="713.2" x2="49.5" y2="720.5" stroke="#26a69a" stroke-width="1.1"/>
<rect x="46.7" y="714.7" width="5.6" height="4.3" fill="#26a69a"/>
<line x1="56.8" y1="709.5" x2="56.8" y2="718.1" stroke="#26a69a" stroke-width="1.1"/>
<rect x="54.0" y="711.0" width="5.6" height="5.6" fill="#26a69a"/>
<line x1="64.1" y1="690.0" x2="64.1" y2="712.0" stroke="#26a69a" stroke-width="1.1"/>
<rect x="61.3" y="694.0" width="5.6" height="17.0" fill="#26a69a"/>
<line x1="71.5" y1="691.5" x2="71.5" y2="703.0" stroke="#ef5350" stroke-width="1.1"/>
<rect x="68.7" y="695.0" width="5.6" height="2.0" fill="#ef5350"/>
<line x1="78.8" y1="694.5" x2="78.8" y2="702.5" stroke="#ef5350" stroke-width="1.1"/>
<rect x="76.0" y="696.0" width="5.6" height="5.0" fill="#ef5350"/>
<line x1="86.2" y1="699.0" x2="86.2" y2="709.1" stroke="#ef5350" stroke-width="1.1"/>
<rect x="83.4" y="700.5" width="5.6" height="7.1" fill="#ef5350"/>
<line x1="93.5" y1="701.0" x2="93.5" y2="715.0" stroke="#ef5350" stroke-width="1.1"/>
<rect x="90.7" y="707.6" width="5.6" height="5.8" fill="#ef5350"/>
<line x1="100.9" y1="704.0" x2="100.9" y2="713.0" stroke="#26a69a" stroke-width="1.1"/>
<rect x="98.1" y="711.0" width="5.6" height="1.2" fill="#26a69a"/>
<line x1="108.2" y1="707.0" x2="108.2" y2="727.0" stroke="#ef5350" stroke-width="1.1"/>
<rect x="105.4" y="710.0" width="5.6" height="15.0" fill="#ef5350"/>
<line x1="115.5" y1="722.5" x2="115.5" y2="735.5" stroke="#ef5350" stroke-width="1.1"/>
<rect x="112.7" y="724.0" width="5.6" height="10.0" fill="#ef5350"/>
<line x1="122.9" y1="731.0" x2="122.9" y2="746.0" stroke="#ef5350" stroke-width="1.1"/>
<rect x="120.1" y="733.0" width="5.6" height="2.0" fill="#ef5350"/>
<line x1="130.2" y1="722.5" x2="130.2" y2="736.1" stroke="#26a69a" stroke-width="1.1"/>
<rect x="127.4" y="724.0" width="5.6" height="10.6" fill="#26a69a"/>
<line x1="137.6" y1="714.0" x2="137.6" y2="727.0" stroke="#ef5350" stroke-width="1.1"/>
<rect x="134.8" y="720.5" width="5.6" height="2.5" fill="#ef5350"/>
<line x1="144.9" y1="721.5" x2="144.9" y2="731.5" stroke="#ef5350" stroke-width="1.1"/>
<rect x="142.1" y="723.0" width="5.6" height="7.0" fill="#ef5350"/>
<line x1="152.3" y1="728.5" x2="152.3" y2="736.5" stroke="#ef5350" stroke-width="1.1"/>
<rect x="149.5" y="730.0" width="5.6" height="5.0" fill="#ef5350"/>
<line x1="159.6" y1="733.1" x2="159.6" y2="745.1" stroke="#ef5350" stroke-width="1.1"/>
<rect x="156.8" y="734.6" width="5.6" height="9.0" fill="#ef5350"/>
<line x1="166.9" y1="736.5" x2="166.9" y2="746.5" stroke="#26a69a" stroke-width="1.1"/>
<rect x="164.1" y="738.0" width="5.6" height="7.0" fill="#26a69a"/>
<line x1="174.3" y1="733.0" x2="174.3" y2="742.0" stroke="#ef5350" stroke-width="1.1"/>
<rect x="171.5" y="738.0" width="5.6" height="1.2" fill="#ef5350"/>
<line x1="181.6" y1="722.5" x2="181.6" y2="740.5" stroke="#26a69a" stroke-width="1.1"/>
<rect x="178.8" y="724.0" width="5.6" height="15.0" fill="#26a69a"/>
<line x1="189.0" y1="707.5" x2="189.0" y2="725.5" stroke="#26a69a" stroke-width="1.1"/>
<rect x="186.2" y="709.0" width="5.6" height="15.0" fill="#26a69a"/>
<line x1="196.3" y1="704.0" x2="196.3" y2="714.0" stroke="#ef5350" stroke-width="1.1"/>
<rect x="193.5" y="709.0" width="5.6" height="4.0" fill="#ef5350"/>
<line x1="203.7" y1="704.7" x2="203.7" y2="717.6" stroke="#ef5350" stroke-width="1.1"/>
<rect x="200.9" y="711.8" width="5.6" height="2.6" fill="#ef5350"/>
<line x1="211.0" y1="712.2" x2="211.0" y2="724.9" stroke="#ef5350" stroke-width="1.1"/>
<rect x="208.2" y="713.7" width="5.6" height="9.7" fill="#ef5350"/>
<line x1="218.3" y1="720.0" x2="218.3" y2="733.0" stroke="#ef5350" stroke-width="1.1"/>
<rect x="215.5" y="722.7" width="5.6" height="5.2" fill="#ef5350"/>
<line x1="225.7" y1="716.1" x2="225.7" y2="729.4" stroke="#26a69a" stroke-width="1.1"/>
<rect x="222.9" y="717.6" width="5.6" height="10.3" fill="#26a69a"/>
<line x1="233.0" y1="708.0" x2="233.0" y2="718.0" stroke="#26a69a" stroke-width="1.1"/>
<rect x="230.2" y="713.7" width="5.6" height="3.9" fill="#26a69a"/>
<line x1="240.4" y1="709.0" x2="240.4" y2="717.6" stroke="#ef5350" stroke-width="1.1"/>
<rect x="237.6" y="711.8" width="5.6" height="2.6" fill="#ef5350"/>
<line x1="247.7" y1="703.5" x2="247.7" y2="716.5" stroke="#26a69a" stroke-width="1.1"/>
<rect x="244.9" y="705.0" width="5.6" height="10.0" fill="#26a69a"/>
<line x1="255.1" y1="704.0" x2="255.1" y2="710.0" stroke="#ef5350" stroke-width="1.1"/>
<rect x="252.3" y="705.3" width="5.6" height="2.0" fill="#ef5350"/>
<line x1="262.4" y1="688.6" x2="262.4" y2="707.0" stroke="#26a69a" stroke-width="1.1"/>
<rect x="259.6" y="698.0" width="5.6" height="8.6" fill="#26a69a"/>
<line x1="269.7" y1="693.8" x2="269.7" y2="716.0" stroke="#ef5350" stroke-width="1.1"/>
<rect x="266.9" y="696.0" width="5.6" height="12.0" fill="#ef5350"/>
<line x1="277.1" y1="703.0" x2="277.1" y2="717.6" stroke="#26a69a" stroke-width="1.1"/>
<rect x="274.3" y="707.3" width="5.6" height="3.2" fill="#26a69a"/>
<line x1="284.4" y1="698.0" x2="284.4" y2="710.5" stroke="#26a69a" stroke-width="1.1"/>
<rect x="281.6" y="706.0" width="5.6" height="1.3" fill="#26a69a"/>
<line x1="291.8" y1="698.0" x2="291.8" y2="709.0" stroke="#ef5350" stroke-width="1.1"/>
<rect x="289.0" y="705.3" width="5.6" height="3.3" fill="#ef5350"/>
<line x1="299.1" y1="707.1" x2="299.1" y2="719.7" stroke="#ef5350" stroke-width="1.1"/>
<rect x="296.3" y="708.6" width="5.6" height="9.6" fill="#ef5350"/>
<line x1="306.5" y1="714.5" x2="306.5" y2="719.5" stroke="#26a69a" stroke-width="1.1"/>
<rect x="303.7" y="716.0" width="5.6" height="2.0" fill="#26a69a"/>
<line x1="313.8" y1="715.5" x2="313.8" y2="722.9" stroke="#ef5350" stroke-width="1.1"/>
<rect x="311.0" y="717.0" width="5.6" height="4.4" fill="#ef5350"/>
<line x1="321.1" y1="715.0" x2="321.1" y2="726.0" stroke="#26a69a" stroke-width="1.1"/>
<rect x="318.3" y="716.3" width="5.6" height="5.7" fill="#26a69a"/>
<line x1="328.5" y1="714.1" x2="328.5" y2="719.1" stroke="#ef5350" stroke-width="1.1"/>
<rect x="325.7" y="715.6" width="5.6" height="2.0" fill="#ef5350"/>
<line x1="335.8" y1="704.0" x2="335.8" y2="727.0" stroke="#26a69a" stroke-width="1.1"/>
<rect x="333.0" y="707.3" width="5.6" height="9.7" fill="#26a69a"/>
<line x1="343.2" y1="701.5" x2="343.2" y2="710.5" stroke="#26a69a" stroke-width="1.1"/>
<rect x="340.4" y="706.6" width="5.6" height="1.4" fill="#26a69a"/>
<line x1="350.5" y1="701.5" x2="350.5" y2="718.0" stroke="#ef5350" stroke-width="1.1"/>
<rect x="347.7" y="711.8" width="5.6" height="5.8" fill="#ef5350"/>
<line x1="357.9" y1="715.5" x2="357.9" y2="721.0" stroke="#ef5350" stroke-width="1.1"/>
<rect x="355.1" y="717.0" width="5.6" height="2.5" fill="#ef5350"/>
<line x1="365.2" y1="705.1" x2="365.2" y2="721.0" stroke="#26a69a" stroke-width="1.1"/>
<rect x="362.4" y="706.6" width="5.6" height="12.9" fill="#26a69a"/>
<line x1="372.5" y1="701.0" x2="372.5" y2="711.0" stroke="#ef5350" stroke-width="1.1"/>
<rect x="369.7" y="708.0" width="5.6" height="2.5" fill="#ef5350"/>
<line x1="379.9" y1="706.5" x2="379.9" y2="724.9" stroke="#ef5350" stroke-width="1.1"/>
<rect x="377.1" y="708.0" width="5.6" height="15.4" fill="#ef5350"/>
<line x1="387.2" y1="709.0" x2="387.2" y2="720.0" stroke="#26a69a" stroke-width="1.1"/>
<rect x="384.4" y="711.3" width="5.6" height="6.7" fill="#26a69a"/>
<line x1="394.6" y1="700.6" x2="394.6" y2="712.0" stroke="#26a69a" stroke-width="1.1"/>
<rect x="391.8" y="704.5" width="5.6" height="6.8" fill="#26a69a"/>
<line x1="401.9" y1="696.8" x2="401.9" y2="705.0" stroke="#26a69a" stroke-width="1.1"/>
<rect x="399.1" y="699.7" width="5.6" height="4.8" fill="#26a69a"/>
<line x1="409.3" y1="692.5" x2="409.3" y2="701.2" stroke="#26a69a" stroke-width="1.1"/>
<rect x="406.5" y="694.0" width="5.6" height="5.7" fill="#26a69a"/>
<line x1="416.6" y1="669.2" x2="416.6" y2="696.4" stroke="#26a69a" stroke-width="1.1"/>
<rect x="413.8" y="670.7" width="5.6" height="24.2" fill="#26a69a"/>
<line x1="423.9" y1="652.4" x2="423.9" y2="672.0" stroke="#26a69a" stroke-width="1.1"/>
<rect x="421.1" y="654.3" width="5.6" height="17.4" fill="#26a69a"/>
<line x1="431.3" y1="648.5" x2="431.3" y2="659.0" stroke="#26a69a" stroke-width="1.1"/>
<rect x="428.5" y="652.4" width="5.6" height="1.9" fill="#26a69a"/>
<line x1="438.6" y1="635.0" x2="438.6" y2="653.0" stroke="#26a69a" stroke-width="1.1"/>
<rect x="435.8" y="643.7" width="5.6" height="8.7" fill="#26a69a"/>
<line x1="446.0" y1="637.0" x2="446.0" y2="649.5" stroke="#ef5350" stroke-width="1.1"/>
<rect x="443.2" y="643.7" width="5.6" height="2.9" fill="#ef5350"/>
<line x1="453.3" y1="632.5" x2="453.3" y2="648.1" stroke="#26a69a" stroke-width="1.1"/>
<rect x="450.5" y="634.0" width="5.6" height="12.6" fill="#26a69a"/>
<line x1="460.7" y1="626.8" x2="460.7" y2="636.5" stroke="#26a69a" stroke-width="1.1"/>
<rect x="457.9" y="628.3" width="5.6" height="6.7" fill="#26a69a"/>
<line x1="468.0" y1="597.4" x2="468.0" y2="629.0" stroke="#26a69a" stroke-width="1.1"/>
<rect x="465.2" y="603.0" width="5.6" height="25.3" fill="#26a69a"/>
<line x1="475.4" y1="590.6" x2="475.4" y2="605.0" stroke="#26a69a" stroke-width="1.1"/>
<rect x="472.6" y="595.9" width="5.6" height="8.1" fill="#26a69a"/>
<line x1="482.7" y1="570.0" x2="482.7" y2="598.4" stroke="#26a69a" stroke-width="1.1"/>
<rect x="479.9" y="571.5" width="5.6" height="25.4" fill="#26a69a"/>
<line x1="490.0" y1="570.5" x2="490.0" y2="595.0" stroke="#ef5350" stroke-width="1.1"/>
<rect x="487.2" y="571.5" width="5.6" height="6.1" fill="#ef5350"/>
<line x1="497.4" y1="516.6" x2="497.4" y2="578.0" stroke="#26a69a" stroke-width="1.1"/>
<rect x="494.6" y="543.0" width="5.6" height="34.6" fill="#26a69a"/>
<line x1="504.7" y1="533.0" x2="504.7" y2="577.6" stroke="#ef5350" stroke-width="1.1"/>
<rect x="501.9" y="543.0" width="5.6" height="19.3" fill="#ef5350"/>
<line x1="512.1" y1="554.0" x2="512.1" y2="590.8" stroke="#ef5350" stroke-width="1.1"/>
<rect x="509.3" y="561.3" width="5.6" height="22.4" fill="#ef5350"/>
<line x1="519.4" y1="569.5" x2="519.4" y2="590.8" stroke="#ef5350" stroke-width="1.1"/>
<rect x="516.6" y="582.7" width="5.6" height="3.0" fill="#ef5350"/>
<line x1="526.8" y1="558.3" x2="526.8" y2="586.0" stroke="#26a69a" stroke-width="1.1"/>
<rect x="524.0" y="566.4" width="5.6" height="19.3" fill="#26a69a"/>
<line x1="534.1" y1="560.0" x2="534.1" y2="572.5" stroke="#26a69a" stroke-width="1.1"/>
<rect x="531.3" y="562.3" width="5.6" height="4.1" fill="#26a69a"/>
<line x1="541.4" y1="545.0" x2="541.4" y2="570.0" stroke="#26a69a" stroke-width="1.1"/>
<rect x="538.6" y="546.0" width="5.6" height="17.3" fill="#26a69a"/>
<line x1="548.8" y1="537.0" x2="548.8" y2="550.0" stroke="#26a69a" stroke-width="1.1"/>
<rect x="546.0" y="544.0" width="5.6" height="3.1" fill="#26a69a"/>
<line x1="556.1" y1="539.0" x2="556.1" y2="549.0" stroke="#26a69a" stroke-width="1.1"/>
<rect x="553.3" y="540.0" width="5.6" height="5.0" fill="#26a69a"/>
<line x1="563.5" y1="525.7" x2="563.5" y2="543.0" stroke="#26a69a" stroke-width="1.1"/>
<rect x="560.7" y="533.9" width="5.6" height="8.1" fill="#26a69a"/>
<line x1="570.8" y1="504.4" x2="570.8" y2="540.0" stroke="#26a69a" stroke-width="1.1"/>
<rect x="568.0" y="511.5" width="5.6" height="27.5" fill="#26a69a"/>
<line x1="578.2" y1="504.4" x2="578.2" y2="523.7" stroke="#ef5350" stroke-width="1.1"/>
<rect x="575.4" y="511.5" width="5.6" height="2.0" fill="#ef5350"/>
<line x1="585.5" y1="493.2" x2="585.5" y2="513.0" stroke="#26a69a" stroke-width="1.1"/>
<rect x="582.7" y="507.4" width="5.6" height="5.1" fill="#26a69a"/>
<line x1="592.8" y1="500.0" x2="592.8" y2="515.6" stroke="#26a69a" stroke-width="1.1"/>
<rect x="590.0" y="501.3" width="5.6" height="6.1" fill="#26a69a"/>
<line x1="600.2" y1="487.0" x2="600.2" y2="503.0" stroke="#26a69a" stroke-width="1.1"/>
<rect x="597.4" y="492.2" width="5.6" height="10.1" fill="#26a69a"/>
<line x1="607.5" y1="478.5" x2="607.5" y2="494.7" stroke="#26a69a" stroke-width="1.1"/>
<rect x="604.7" y="480.0" width="5.6" height="13.2" fill="#26a69a"/>
<line x1="614.9" y1="439.9" x2="614.9" y2="481.5" stroke="#26a69a" stroke-width="1.1"/>
<rect x="612.1" y="441.4" width="5.6" height="38.6" fill="#26a69a"/>
<line x1="622.2" y1="432.2" x2="622.2" y2="468.8" stroke="#ef5350" stroke-width="1.1"/>
<rect x="619.4" y="442.4" width="5.6" height="22.3" fill="#ef5350"/>
<line x1="629.6" y1="446.4" x2="629.6" y2="465.0" stroke="#26a69a" stroke-width="1.1"/>
<rect x="626.8" y="453.5" width="5.6" height="11.2" fill="#26a69a"/>
<line x1="636.9" y1="438.3" x2="636.9" y2="463.7" stroke="#26a69a" stroke-width="1.1"/>
<rect x="634.1" y="449.5" width="5.6" height="5.1" fill="#26a69a"/>
<line x1="644.2" y1="442.7" x2="644.2" y2="469.0" stroke="#ef5350" stroke-width="1.1"/>
<rect x="641.4" y="450.6" width="5.6" height="6.6" fill="#ef5350"/>
<line x1="651.6" y1="455.0" x2="651.6" y2="478.0" stroke="#ef5350" stroke-width="1.1"/>
<rect x="648.8" y="457.2" width="5.6" height="18.5" fill="#ef5350"/>
<line x1="658.9" y1="448.6" x2="658.9" y2="479.6" stroke="#26a69a" stroke-width="1.1"/>
<rect x="656.1" y="451.2" width="5.6" height="24.5" fill="#26a69a"/>
<line x1="666.3" y1="395.0" x2="666.3" y2="452.0" stroke="#26a69a" stroke-width="1.1"/>
<rect x="663.5" y="404.3" width="5.6" height="47.6" fill="#26a69a"/>
<line x1="673.6" y1="401.0" x2="673.6" y2="434.7" stroke="#ef5350" stroke-width="1.1"/>
<rect x="670.8" y="404.3" width="5.6" height="19.2" fill="#ef5350"/>
<line x1="681.0" y1="411.0" x2="681.0" y2="430.8" stroke="#26a69a" stroke-width="1.1"/>
<rect x="678.2" y="418.2" width="5.6" height="8.6" fill="#26a69a"/>
<line x1="688.3" y1="414.3" x2="688.3" y2="424.2" stroke="#26a69a" stroke-width="1.1"/>
<rect x="685.5" y="417.6" width="5.6" height="1.9" fill="#26a69a"/>
<line x1="695.6" y1="413.0" x2="695.6" y2="447.3" stroke="#ef5350" stroke-width="1.1"/>
<rect x="692.8" y="418.2" width="5.6" height="21.2" fill="#ef5350"/>
<line x1="703.0" y1="409.0" x2="703.0" y2="443.3" stroke="#26a69a" stroke-width="1.1"/>
<rect x="700.2" y="416.9" width="5.6" height="22.5" fill="#26a69a"/>
<line x1="710.3" y1="404.3" x2="710.3" y2="418.0" stroke="#26a69a" stroke-width="1.1"/>
<rect x="707.5" y="410.3" width="5.6" height="7.3" fill="#26a69a"/>
<line x1="717.7" y1="393.8" x2="717.7" y2="416.0" stroke="#ef5350" stroke-width="1.1"/>
<rect x="714.9" y="413.6" width="5.6" height="2.0" fill="#ef5350"/>
<line x1="725.0" y1="409.0" x2="725.0" y2="422.8" stroke="#26a69a" stroke-width="1.1"/>
<rect x="722.2" y="411.6" width="5.6" height="3.3" fill="#26a69a"/>
<line x1="732.4" y1="403.7" x2="732.4" y2="430.8" stroke="#ef5350" stroke-width="1.1"/>
<rect x="729.6" y="411.6" width="5.6" height="10.6" fill="#ef5350"/>
<line x1="739.7" y1="418.9" x2="739.7" y2="469.0" stroke="#ef5350" stroke-width="1.1"/>
<rect x="736.9" y="421.5" width="5.6" height="34.4" fill="#ef5350"/>
<line x1="747.0" y1="431.4" x2="747.0" y2="456.0" stroke="#26a69a" stroke-width="1.1"/>
<rect x="744.2" y="435.4" width="5.6" height="20.5" fill="#26a69a"/>
<line x1="754.4" y1="428.0" x2="754.4" y2="446.0" stroke="#ef5350" stroke-width="1.1"/>
<rect x="751.6" y="434.0" width="5.6" height="4.0" fill="#ef5350"/>
<line x1="761.7" y1="425.5" x2="761.7" y2="442.0" stroke="#26a69a" stroke-width="1.1"/>
<rect x="758.9" y="433.4" width="5.6" height="5.3" fill="#26a69a"/>
<line x1="769.1" y1="430.0" x2="769.1" y2="457.0" stroke="#ef5350" stroke-width="1.1"/>
<rect x="766.3" y="433.4" width="5.6" height="23.1" fill="#ef5350"/>
<line x1="776.4" y1="444.0" x2="776.4" y2="477.7" stroke="#ef5350" stroke-width="1.1"/>
<rect x="773.6" y="456.5" width="5.6" height="8.0" fill="#ef5350"/>
<line x1="783.8" y1="452.0" x2="783.8" y2="468.4" stroke="#26a69a" stroke-width="1.1"/>
<rect x="781.0" y="462.5" width="5.6" height="2.0" fill="#26a69a"/>
<line x1="791.1" y1="458.5" x2="791.1" y2="475.7" stroke="#ef5350" stroke-width="1.1"/>
<rect x="788.3" y="461.0" width="5.6" height="1.5" fill="#ef5350"/>
<line x1="798.4" y1="459.4" x2="798.4" y2="492.0" stroke="#ef5350" stroke-width="1.1"/>
<rect x="795.6" y="462.5" width="5.6" height="22.5" fill="#ef5350"/>
<line x1="805.8" y1="470.0" x2="805.8" y2="486.0" stroke="#26a69a" stroke-width="1.1"/>
<rect x="803.0" y="474.6" width="5.6" height="10.7" fill="#26a69a"/>
<line x1="813.1" y1="468.5" x2="813.1" y2="486.8" stroke="#ef5350" stroke-width="1.1"/>
<rect x="810.3" y="473.8" width="5.6" height="4.6" fill="#ef5350"/>
<line x1="820.5" y1="473.0" x2="820.5" y2="485.3" stroke="#26a69a" stroke-width="1.1"/>
<rect x="817.7" y="477.7" width="5.6" height="1.2" fill="#26a69a"/>
<line x1="827.8" y1="464.0" x2="827.8" y2="481.0" stroke="#26a69a" stroke-width="1.1"/>
<rect x="825.0" y="469.3" width="5.6" height="10.7" fill="#26a69a"/>
<line x1="835.2" y1="442.6" x2="835.2" y2="471.0" stroke="#26a69a" stroke-width="1.1"/>
<rect x="832.4" y="447.2" width="5.6" height="22.8" fill="#26a69a"/>
<line x1="842.5" y1="416.7" x2="842.5" y2="449.5" stroke="#26a69a" stroke-width="1.1"/>
<rect x="839.7" y="418.2" width="5.6" height="29.8" fill="#26a69a"/>
<line x1="849.8" y1="416.0" x2="849.8" y2="429.0" stroke="#ef5350" stroke-width="1.1"/>
<rect x="847.0" y="417.4" width="5.6" height="6.9" fill="#ef5350"/>
<line x1="857.2" y1="401.4" x2="857.2" y2="425.0" stroke="#26a69a" stroke-width="1.1"/>
<rect x="854.4" y="404.5" width="5.6" height="19.8" fill="#26a69a"/>
<line x1="864.5" y1="384.0" x2="864.5" y2="410.0" stroke="#26a69a" stroke-width="1.1"/>
<rect x="861.7" y="386.0" width="5.6" height="18.5" fill="#26a69a"/>
<line x1="871.9" y1="360.0" x2="871.9" y2="385.0" stroke="#26a69a" stroke-width="1.1"/>
<rect x="869.1" y="370.0" width="5.6" height="14.0" fill="#26a69a"/>
<line x1="879.2" y1="333.0" x2="879.2" y2="371.0" stroke="#26a69a" stroke-width="1.1"/>
<rect x="876.4" y="336.0" width="5.6" height="34.0" fill="#26a69a"/>
<line x1="886.6" y1="330.0" x2="886.6" y2="357.0" stroke="#26a69a" stroke-width="1.1"/>
<rect x="883.8" y="335.0" width="5.6" height="2.6" fill="#26a69a"/>
<line x1="893.9" y1="331.0" x2="893.9" y2="354.0" stroke="#26a69a" stroke-width="1.1"/>
<rect x="891.1" y="333.5" width="5.6" height="1.5" fill="#26a69a"/>
<line x1="901.2" y1="318.9" x2="901.2" y2="349.0" stroke="#26a69a" stroke-width="1.1"/>
<rect x="898.4" y="333.5" width="5.6" height="2.5" fill="#26a69a"/>
<line x1="908.6" y1="311.0" x2="908.6" y2="343.0" stroke="#26a69a" stroke-width="1.1"/>
<rect x="905.8" y="312.4" width="5.6" height="21.9" fill="#26a69a"/>
<line x1="915.9" y1="309.0" x2="915.9" y2="350.6" stroke="#ef5350" stroke-width="1.1"/>
<rect x="913.1" y="312.4" width="5.6" height="33.3" fill="#ef5350"/>
<line x1="923.3" y1="328.6" x2="923.3" y2="390.4" stroke="#ef5350" stroke-width="1.1"/>
<rect x="920.5" y="344.9" width="5.6" height="34.1" fill="#ef5350"/>
<line x1="930.6" y1="312.4" x2="930.6" y2="380.0" stroke="#26a69a" stroke-width="1.1"/>
<rect x="927.8" y="323.7" width="5.6" height="55.3" fill="#26a69a"/>
<line x1="938.0" y1="312.4" x2="938.0" y2="331.0" stroke="#26a69a" stroke-width="1.1"/>
<rect x="935.2" y="320.5" width="5.6" height="3.2" fill="#26a69a"/>
<line x1="945.3" y1="287.0" x2="945.3" y2="322.0" stroke="#26a69a" stroke-width="1.1"/>
<rect x="942.5" y="288.8" width="5.6" height="32.5" fill="#26a69a"/>
<line x1="952.6" y1="288.0" x2="952.6" y2="306.7" stroke="#ef5350" stroke-width="1.1"/>
<rect x="949.8" y="289.6" width="5.6" height="8.9" fill="#ef5350"/>
<line x1="960.0" y1="296.0" x2="960.0" y2="335.0" stroke="#ef5350" stroke-width="1.1"/>
<rect x="957.2" y="297.7" width="5.6" height="26.0" fill="#ef5350"/>
<line x1="967.3" y1="314.0" x2="967.3" y2="334.0" stroke="#26a69a" stroke-width="1.1"/>
<rect x="964.5" y="318.0" width="5.6" height="6.6" fill="#26a69a"/>
<line x1="974.7" y1="310.0" x2="974.7" y2="330.0" stroke="#26a69a" stroke-width="1.1"/>
<rect x="971.9" y="311.5" width="5.6" height="7.4" fill="#26a69a"/>
<line x1="982.0" y1="295.3" x2="982.0" y2="319.7" stroke="#26a69a" stroke-width="1.1"/>
<rect x="979.2" y="298.5" width="5.6" height="14.7" fill="#26a69a"/>
<line x1="989.4" y1="281.5" x2="989.4" y2="300.0" stroke="#26a69a" stroke-width="1.1"/>
<rect x="986.6" y="289.6" width="5.6" height="9.7" fill="#26a69a"/>
<line x1="996.7" y1="286.3" x2="996.7" y2="310.7" stroke="#ef5350" stroke-width="1.1"/>
<rect x="993.9" y="289.6" width="5.6" height="18.7" fill="#ef5350"/>
<line x1="1004.0" y1="307.0" x2="1004.0" y2="324.6" stroke="#ef5350" stroke-width="1.1"/>
<rect x="1001.2" y="308.3" width="5.6" height="9.7" fill="#ef5350"/>
<line x1="1011.4" y1="304.2" x2="1011.4" y2="323.0" stroke="#26a69a" stroke-width="1.1"/>
<rect x="1008.6" y="309.0" width="5.6" height="8.2" fill="#26a69a"/>
<line x1="1018.7" y1="294.5" x2="1018.7" y2="311.0" stroke="#26a69a" stroke-width="1.1"/>
<rect x="1015.9" y="304.2" width="5.6" height="5.8" fill="#26a69a"/>
<line x1="1026.1" y1="301.8" x2="1026.1" y2="322.6" stroke="#26a69a" stroke-width="1.1"/>
<rect x="1023.3" y="303.3" width="5.6" height="1.2" fill="#26a69a"/>
<line x1="1033.4" y1="297.0" x2="1033.4" y2="310.0" stroke="#26a69a" stroke-width="1.1"/>
<rect x="1030.6" y="302.3" width="5.6" height="1.2" fill="#26a69a"/>
<line x1="1040.8" y1="290.0" x2="1040.8" y2="314.5" stroke="#26a69a" stroke-width="1.1"/>
<rect x="1038.0" y="301.3" width="5.6" height="2.0" fill="#26a69a"/>
<line x1="1048.1" y1="267.8" x2="1048.1" y2="304.0" stroke="#26a69a" stroke-width="1.1"/>
<rect x="1045.3" y="273.9" width="5.6" height="29.4" fill="#26a69a"/>
<line x1="1055.4" y1="272.0" x2="1055.4" y2="292.0" stroke="#ef5350" stroke-width="1.1"/>
<rect x="1052.6" y="273.9" width="5.6" height="11.1" fill="#ef5350"/>
<line x1="1062.8" y1="265.7" x2="1062.8" y2="289.0" stroke="#26a69a" stroke-width="1.1"/>
<rect x="1060.0" y="274.9" width="5.6" height="11.1" fill="#26a69a"/>
<line x1="1070.1" y1="234.2" x2="1070.1" y2="275.0" stroke="#26a69a" stroke-width="1.1"/>
<rect x="1067.3" y="244.4" width="5.6" height="30.5" fill="#26a69a"/>
<line x1="1077.5" y1="240.3" x2="1077.5" y2="255.6" stroke="#ef5350" stroke-width="1.1"/>
<rect x="1074.7" y="244.4" width="5.6" height="9.1" fill="#ef5350"/>
<line x1="1084.8" y1="249.0" x2="1084.8" y2="265.0" stroke="#ef5350" stroke-width="1.1"/>
<rect x="1082.0" y="253.5" width="5.6" height="7.1" fill="#ef5350"/>
<line x1="1092.2" y1="254.6" x2="1092.2" y2="273.9" stroke="#26a69a" stroke-width="1.1"/>
<rect x="1089.4" y="258.6" width="5.6" height="2.0" fill="#26a69a"/>
<line x1="1099.5" y1="254.6" x2="1099.5" y2="263.7" stroke="#26a69a" stroke-width="1.1"/>
<rect x="1096.7" y="257.6" width="5.6" height="1.2" fill="#26a69a"/>
<line x1="1106.8" y1="248.5" x2="1106.8" y2="275.0" stroke="#ef5350" stroke-width="1.1"/>
<rect x="1104.0" y="257.6" width="5.6" height="17.3" fill="#ef5350"/>
<line x1="1114.2" y1="263.7" x2="1114.2" y2="310.4" stroke="#ef5350" stroke-width="1.1"/>
<rect x="1111.4" y="274.9" width="5.6" height="26.4" fill="#ef5350"/>
<line x1="1121.5" y1="288.0" x2="1121.5" y2="310.0" stroke="#26a69a" stroke-width="1.1"/>
<rect x="1118.7" y="289.0" width="5.6" height="11.3" fill="#26a69a"/>
<line x1="1128.9" y1="283.0" x2="1128.9" y2="295.0" stroke="#26a69a" stroke-width="1.1"/>
<rect x="1126.1" y="285.0" width="5.6" height="4.0" fill="#26a69a"/>
<line x1="1136.2" y1="272.8" x2="1136.2" y2="295.2" stroke="#ef5350" stroke-width="1.1"/>
<rect x="1133.4" y="285.0" width="5.6" height="6.1" fill="#ef5350"/>
<line x1="1143.6" y1="289.6" x2="1143.6" y2="338.4" stroke="#ef5350" stroke-width="1.1"/>
<rect x="1140.8" y="291.1" width="5.6" height="45.8" fill="#ef5350"/>
<line x1="1150.9" y1="328.7" x2="1150.9" y2="369.4" stroke="#ef5350" stroke-width="1.1"/>
<rect x="1148.1" y="336.9" width="5.6" height="21.3" fill="#ef5350"/>
<line x1="1158.2" y1="354.7" x2="1158.2" y2="390.2" stroke="#ef5350" stroke-width="1.1"/>
<rect x="1155.5" y="356.2" width="5.6" height="32.5" fill="#ef5350"/>
<line x1="1165.6" y1="357.0" x2="1165.6" y2="411.0" stroke="#26a69a" stroke-width="1.1"/>
<rect x="1162.8" y="358.2" width="5.6" height="30.5" fill="#26a69a"/>
<line x1="1172.9" y1="330.8" x2="1172.9" y2="374.5" stroke="#26a69a" stroke-width="1.1"/>
<rect x="1170.1" y="344.0" width="5.6" height="14.2" fill="#26a69a"/>
<line x1="1180.3" y1="343.0" x2="1180.3" y2="366.0" stroke="#ef5350" stroke-width="1.1"/>
<rect x="1177.5" y="344.0" width="5.6" height="21.3" fill="#ef5350"/>
<line x1="1187.6" y1="312.5" x2="1187.6" y2="369.4" stroke="#26a69a" stroke-width="1.1"/>
<rect x="1184.8" y="320.6" width="5.6" height="44.7" fill="#26a69a"/>
<line x1="1195.0" y1="310.5" x2="1195.0" y2="333.3" stroke="#ef5350" stroke-width="1.1"/>
<rect x="1192.2" y="319.6" width="5.6" height="3.7" fill="#ef5350"/>
<line x1="1202.3" y1="318.0" x2="1202.3" y2="327.0" stroke="#26a69a" stroke-width="1.1"/>
<rect x="1199.5" y="320.5" width="5.6" height="2.8" fill="#26a69a"/>
<line x1="1209.7" y1="316.0" x2="1209.7" y2="381.0" stroke="#ef5350" stroke-width="1.1"/>
<rect x="1206.9" y="320.5" width="5.6" height="43.0" fill="#ef5350"/>
<line x1="1217.0" y1="355.3" x2="1217.0" y2="385.5" stroke="#26a69a" stroke-width="1.1"/>
<rect x="1214.2" y="362.6" width="5.6" height="1.9" fill="#26a69a"/>
<line x1="1224.3" y1="346.0" x2="1224.3" y2="363.0" stroke="#26a69a" stroke-width="1.1"/>
<rect x="1221.5" y="351.6" width="5.6" height="11.0" fill="#26a69a"/>
<line x1="1231.7" y1="350.0" x2="1231.7" y2="369.0" stroke="#ef5350" stroke-width="1.1"/>
<rect x="1228.9" y="351.6" width="5.6" height="4.6" fill="#ef5350"/>
<line x1="1239.0" y1="330.6" x2="1239.0" y2="360.8" stroke="#26a69a" stroke-width="1.1"/>
<rect x="1236.2" y="337.0" width="5.6" height="19.2" fill="#26a69a"/>
<line x1="1246.4" y1="312.3" x2="1246.4" y2="343.4" stroke="#26a69a" stroke-width="1.1"/>
<rect x="1243.6" y="320.5" width="5.6" height="16.5" fill="#26a69a"/>
<line x1="1253.7" y1="303.0" x2="1253.7" y2="327.8" stroke="#26a69a" stroke-width="1.1"/>
<rect x="1250.9" y="304.0" width="5.6" height="17.4" fill="#26a69a"/>
<line x1="1261.1" y1="277.5" x2="1261.1" y2="305.0" stroke="#26a69a" stroke-width="1.1"/>
<rect x="1258.3" y="284.8" width="5.6" height="19.2" fill="#26a69a"/>
<line x1="1268.4" y1="271.0" x2="1268.4" y2="286.0" stroke="#26a69a" stroke-width="1.1"/>
<rect x="1265.6" y="273.9" width="5.6" height="11.9" fill="#26a69a"/>
<line x1="1275.7" y1="270.2" x2="1275.7" y2="304.0" stroke="#ef5350" stroke-width="1.1"/>
<rect x="1272.9" y="273.9" width="5.6" height="14.6" fill="#ef5350"/>
<line x1="1283.1" y1="277.0" x2="1283.1" y2="298.0" stroke="#26a69a" stroke-width="1.1"/>
<rect x="1280.3" y="281.0" width="5.6" height="6.8" fill="#26a69a"/>
<line x1="1290.4" y1="278.0" x2="1290.4" y2="295.0" stroke="#ef5350" stroke-width="1.1"/>
<rect x="1287.6" y="280.5" width="5.6" height="13.4" fill="#ef5350"/>
<line x1="1297.8" y1="271.2" x2="1297.8" y2="296.5" stroke="#26a69a" stroke-width="1.1"/>
<rect x="1295.0" y="272.7" width="5.6" height="22.3" fill="#26a69a"/>
<line x1="1305.1" y1="243.6" x2="1305.1" y2="272.0" stroke="#26a69a" stroke-width="1.1"/>
<rect x="1302.3" y="248.1" width="5.6" height="22.9" fill="#26a69a"/>
<line x1="1312.5" y1="241.4" x2="1312.5" y2="260.4" stroke="#26a69a" stroke-width="1.1"/>
<rect x="1309.7" y="245.9" width="5.6" height="1.2" fill="#26a69a"/>
<line x1="1319.8" y1="242.0" x2="1319.8" y2="256.0" stroke="#26a69a" stroke-width="1.1"/>
<rect x="1317.0" y="243.0" width="5.6" height="3.4" fill="#26a69a"/>
<line x1="1327.1" y1="217.5" x2="1327.1" y2="245.1" stroke="#26a69a" stroke-width="1.1"/>
<rect x="1324.3" y="219.0" width="5.6" height="24.6" fill="#26a69a"/>
<line x1="1334.5" y1="208.4" x2="1334.5" y2="224.6" stroke="#ef5350" stroke-width="1.1"/>
<rect x="1331.7" y="219.0" width="5.6" height="1.2" fill="#ef5350"/>
<line x1="1341.8" y1="210.3" x2="1341.8" y2="223.3" stroke="#26a69a" stroke-width="1.1"/>
<rect x="1339.0" y="211.8" width="5.6" height="10.0" fill="#26a69a"/>
<line x1="1349.2" y1="161.4" x2="1349.2" y2="216.3" stroke="#26a69a" stroke-width="1.1"/>
<rect x="1346.4" y="167.8" width="5.6" height="44.8" fill="#26a69a"/>
<line x1="1356.5" y1="123.0" x2="1356.5" y2="169.0" stroke="#26a69a" stroke-width="1.1"/>
<rect x="1353.7" y="149.5" width="5.6" height="18.3" fill="#26a69a"/>
<line x1="1363.9" y1="134.9" x2="1363.9" y2="156.8" stroke="#26a69a" stroke-width="1.1"/>
<rect x="1361.1" y="142.2" width="5.6" height="7.3" fill="#26a69a"/>
<line x1="1371.2" y1="141.0" x2="1371.2" y2="189.7" stroke="#ef5350" stroke-width="1.1"/>
<rect x="1368.4" y="142.2" width="5.6" height="28.3" fill="#ef5350"/>
<line x1="1378.5" y1="153.0" x2="1378.5" y2="181.0" stroke="#26a69a" stroke-width="1.1"/>
<rect x="1375.7" y="167.8" width="5.6" height="12.8" fill="#26a69a"/>
<line x1="1385.9" y1="131.0" x2="1385.9" y2="189.7" stroke="#26a69a" stroke-width="1.1"/>
<rect x="1383.1" y="132.1" width="5.6" height="35.7" fill="#26a69a"/>
<line x1="1393.2" y1="123.9" x2="1393.2" y2="170.5" stroke="#ef5350" stroke-width="1.1"/>
<rect x="1390.4" y="133.0" width="5.6" height="27.5" fill="#ef5350"/>
<line x1="1400.6" y1="149.0" x2="1400.6" y2="166.0" stroke="#26a69a" stroke-width="1.1"/>
<rect x="1397.8" y="155.0" width="5.6" height="5.5" fill="#26a69a"/>
<line x1="1407.9" y1="151.0" x2="1407.9" y2="167.0" stroke="#ef5350" stroke-width="1.1"/>
<rect x="1405.1" y="155.0" width="5.6" height="11.0" fill="#ef5350"/>
<line x1="1415.3" y1="156.0" x2="1415.3" y2="170.0" stroke="#26a69a" stroke-width="1.1"/>
<rect x="1412.5" y="157.7" width="5.6" height="9.2" fill="#26a69a"/>
<circle cx="4.5" cy="726.0" r="1.7" fill="#0a0a8a"/>
<circle cx="4.5" cy="741.4" r="1.7" fill="#0a0a8a"/>
<circle cx="12.1" cy="724.8" r="1.7" fill="#0a0a8a"/>
<circle cx="12.1" cy="739.7" r="1.7" fill="#0a0a8a"/>
<circle cx="19.7" cy="723.5" r="1.7" fill="#0a0a8a"/>
<circle cx="19.7" cy="738.0" r="1.7" fill="#0a0a8a"/>
<circle cx="27.3" cy="722.3" r="1.7" fill="#0a0a8a"/>
<circle cx="27.3" cy="736.3" r="1.7" fill="#0a0a8a"/>
<circle cx="34.9" cy="721.1" r="1.7" fill="#0a0a8a"/>
<circle cx="34.9" cy="734.6" r="1.7" fill="#0a0a8a"/>
<circle cx="42.5" cy="719.9" r="1.7" fill="#0a0a8a"/>
<circle cx="42.5" cy="732.9" r="1.7" fill="#0a0a8a"/>
<circle cx="50.1" cy="718.6" r="1.7" fill="#0a0a8a"/>
<circle cx="50.1" cy="731.3" r="1.7" fill="#0a0a8a"/>
<circle cx="57.7" cy="717.4" r="1.7" fill="#0a0a8a"/>
<circle cx="57.7" cy="729.6" r="1.7" fill="#0a0a8a"/>
<line x1="3" y1="157" x2="1493" y2="157" stroke="#8f939c" stroke-width="1" stroke-dasharray="1.5,2"/>
<line x1="3" y1="303.4" x2="1475" y2="303.4" stroke="#8a8d96" stroke-width="1.2" stroke-dasharray="4,4"/>
<rect x="3" y="129" width="1490" height="5" fill="#0b0bb5"/>
<rect x="3" y="180.5" width="1490" height="5" fill="#f00d0d"/>
<rect x="3" y="244.5" width="1490" height="5" fill="#f57f17"/>
<rect x="3" y="280.5" width="1490" height="5" fill="#f7ea5c"/>
<rect x="744.5" y="177.5" width="9" height="12" rx="3" fill="#ffffff" stroke="#2a4fd6" stroke-width="1.6"/>
<rect x="3" y="857.8" width="1490" height="77.0" fill="#f3e8fb"/>
<line x1="3" y1="877.0" x2="1493" y2="877.0" stroke="#e6dcf0" stroke-width="1.5"/>
<line x1="3" y1="915.5" x2="1493" y2="915.5" stroke="#e6dcf0" stroke-width="1.5"/>
<line x1="56.8" y1="857.8" x2="56.8" y2="934.8" stroke="#e8def2" stroke-width="1.2"/>
<line x1="130" y1="857.8" x2="130" y2="934.8" stroke="#e8def2" stroke-width="1.2"/>
<line x1="210.8" y1="857.8" x2="210.8" y2="934.8" stroke="#e8def2" stroke-width="1.2"/>
<line x1="285" y1="857.8" x2="285" y2="934.8" stroke="#e8def2" stroke-width="1.2"/>
<line x1="358" y1="857.8" x2="358" y2="934.8" stroke="#e8def2" stroke-width="1.2"/>
<line x1="431.2" y1="857.8" x2="431.2" y2="934.8" stroke="#e8def2" stroke-width="1.2"/>
<line x1="527.3" y1="857.8" x2="527.3" y2="934.8" stroke="#e8def2" stroke-width="1.2"/>
<line x1="610" y1="857.8" x2="610" y2="934.8" stroke="#e8def2" stroke-width="1.2"/>
<line x1="680.6" y1="857.8" x2="680.6" y2="934.8" stroke="#e8def2" stroke-width="1.2"/>
<line x1="754.5" y1="857.8" x2="754.5" y2="934.8" stroke="#e8def2" stroke-width="1.2"/>
<line x1="843" y1="857.8" x2="843" y2="934.8" stroke="#e8def2" stroke-width="1.2"/>
<line x1="916" y1="857.8" x2="916" y2="934.8" stroke="#e8def2" stroke-width="1.2"/>
<line x1="1004.5" y1="857.8" x2="1004.5" y2="934.8" stroke="#e8def2" stroke-width="1.2"/>
<line x1="1085" y1="857.8" x2="1085" y2="934.8" stroke="#e8def2" stroke-width="1.2"/>
<line x1="1159" y1="857.8" x2="1159" y2="934.8" stroke="#e8def2" stroke-width="1.2"/>
<line x1="1231" y1="857.8" x2="1231" y2="934.8" stroke="#e8def2" stroke-width="1.2"/>
<line x1="1327" y1="857.8" x2="1327" y2="934.8" stroke="#e8def2" stroke-width="1.2"/>
<line x1="1416" y1="857.8" x2="1416" y2="934.8" stroke="#e8def2" stroke-width="1.2"/>
<line x1="3" y1="857.8" x2="1493" y2="857.8" stroke="#9b98a8" stroke-width="1" stroke-dasharray="5,4"/>
<line x1="3" y1="934.8" x2="1493" y2="934.8" stroke="#9b98a8" stroke-width="1" stroke-dasharray="5,4"/>
<path d="M3.9,881.0 L12.5,881.8 L19.3,871.8 L27.0,873.3 L34.7,870.2 L48.3,867.0 L56.0,863.7 L64.7,850.2 L71.4,851.5 L92.7,882.4 L100.4,880.5 L115.8,908.5 L122.6,908.8 L129.3,896.9 L136.1,896.9 L159.3,918.5 L166.0,910.4 L174.7,910.8 L188.2,877.2 L201.7,883.0 L211.4,895.0 L218.1,899.2 L225.9,887.2 L233.6,884.3 L240.3,886.3 L247.1,877.6 L254.8,878.0 L261.6,868.9 L269.3,884.3 L282.8,881.4 L290.0,883.4 L298.7,898.8 L305.4,897.3 L313.6,903.6 L320.9,894.9 L328.6,896.5 L336.3,883.4 L343.1,883.4 L350.8,898.8 L357.6,900.7 L365.3,885.3 L372.0,887.6 L379.8,903.6 L392.3,886.3 L406.8,875.6 L417.4,856.3 L424.2,849.6 L431.9,848.2 L438.6,845.1 L446.4,848.0 L454.1,842.4 L461.8,839.0 L467.6,832.2 L475.3,829.3 L483.1,824.5 L489.8,830.3 L497.5,823.5 L512.0,861.2 L519.7,863.1 L525.5,857.3 L535.2,854.4 L542.9,849.6 L556.4,847.6 L564.1,844.7 L570.9,839.0 L581.5,838.0 L591.6,836.1 L607.0,830.3 L614.4,823.5 L622.5,844.4 L636.0,840.5 L643.7,846.7 L651.8,863.1 L665.9,842.4 L673.6,854.8 L688.1,854.0 L695.8,868.9 L703.6,861.2 L709.3,859.2 L717.1,862.1 L726.7,862.1 L733.5,869.8 L740.2,889.2 L747.0,881.4 L754.7,883.0 L761.5,880.5 L770.2,894.9 L776.9,897.8 L791.4,897.3 L799.1,909.4 L805.9,903.6 L817.5,905.6 L827.1,899.2 L842.5,870.8 L850.3,874.7 L863.8,858.3 L871.5,854.4 L879.7,845.7 L900.9,844.7 L908.6,839.0 L916.3,864.1 L923.1,884.3 L931.8,866.0 L938.5,864.4 L946.3,857.3 L953.0,862.1 L959.8,874.7 L970.4,872.7 L988.7,864.6 L1004.2,879.1 L1016.7,875.6 L1024.4,874.3 L1039.9,872.7 L1047.6,861.7 L1055.3,869.8 L1063.1,866.0 L1069.8,855.4 L1085.3,866.0 L1099.7,866.0 L1114.2,894.9 L1121.0,889.2 L1128.7,887.2 L1136.4,891.1 L1143.2,914.2 L1149.9,922.0 L1158.6,934.5 L1165.8,915.2 L1173.1,908.8 L1180.3,915.2 L1188.0,896.9 L1193.8,897.8 L1202.5,896.9 L1210.2,912.3 L1216.0,911.9 L1224.7,906.9 L1231.4,908.1 L1241.1,896.9 L1247.8,891.1 L1260.4,877.6 L1268.1,873.7 L1275.8,880.5 L1282.6,878.0 L1290.3,885.7 L1304.8,868.9 L1320.2,866.4 L1328.0,858.6 L1335.7,859.8 L1341.5,857.3 L1349.2,845.1 L1356.9,841.3 L1363.7,839.9 L1371.4,859.8 L1378.1,858.3 L1385.9,849.6 L1393.6,866.0 L1400.3,865.0 L1408.1,870.8 L1415.8,867.5" fill="none" stroke="#e8966a" stroke-width="1.5" stroke-linejoin="round"/>
<line x1="783.7" y1="47" x2="783.7" y2="947" stroke="#60636e" stroke-width="1.3" stroke-dasharray="5.5,3.5"/>
<rect x="3" y="807.5" width="1548" height="2" fill="#e3e5ea"/>
<rect x="1493" y="47" width="1.3" height="932" fill="#50535e"/>
<rect x="3" y="947" width="1548" height="1.3" fill="#50535e"/>
<text x="1503" y="108.7" font-size="13" fill="#4a4d57" font-weight="normal" text-anchor="start" textLength="34.4" lengthAdjust="spacingAndGlyphs" stroke="#4a4d57" stroke-width="0.3">146.000</text>
<text x="1503" y="148.22" font-size="13" fill="#4a4d57" font-weight="normal" text-anchor="start" textLength="34.4" lengthAdjust="spacingAndGlyphs" stroke="#4a4d57" stroke-width="0.3">144.000</text>
<text x="1503" y="227.26" font-size="13" fill="#4a4d57" font-weight="normal" text-anchor="start" textLength="34.4" lengthAdjust="spacingAndGlyphs" stroke="#4a4d57" stroke-width="0.3">140.000</text>
<text x="1503" y="266.78000000000003" font-size="13" fill="#4a4d57" font-weight="normal" text-anchor="start" textLength="34.4" lengthAdjust="spacingAndGlyphs" stroke="#4a4d57" stroke-width="0.3">138.000</text>
<text x="1503" y="345.82" font-size="13" fill="#4a4d57" font-weight="normal" text-anchor="start" textLength="34.4" lengthAdjust="spacingAndGlyphs" stroke="#4a4d57" stroke-width="0.3">134.000</text>
<text x="1503" y="385.34000000000003" font-size="13" fill="#4a4d57" font-weight="normal" text-anchor="start" textLength="34.4" lengthAdjust="spacingAndGlyphs" stroke="#4a4d57" stroke-width="0.3">132.000</text>
<text x="1503" y="424.86" font-size="13" fill="#4a4d57" font-weight="normal" text-anchor="start" textLength="34.4" lengthAdjust="spacingAndGlyphs" stroke="#4a4d57" stroke-width="0.3">130.000</text>
<text x="1503" y="464.38" font-size="13" fill="#4a4d57" font-weight="normal" text-anchor="start" textLength="34.4" lengthAdjust="spacingAndGlyphs" stroke="#4a4d57" stroke-width="0.3">128.000</text>
<text x="1503" y="503.90000000000003" font-size="13" fill="#4a4d57" font-weight="normal" text-anchor="start" textLength="34.4" lengthAdjust="spacingAndGlyphs" stroke="#4a4d57" stroke-width="0.3">126.000</text>
<text x="1503" y="543.4200000000001" font-size="13" fill="#4a4d57" font-weight="normal" text-anchor="start" textLength="34.4" lengthAdjust="spacingAndGlyphs" stroke="#4a4d57" stroke-width="0.3">124.000</text>
<text x="1503" y="582.94" font-size="13" fill="#4a4d57" font-weight="normal" text-anchor="start" textLength="34.4" lengthAdjust="spacingAndGlyphs" stroke="#4a4d57" stroke-width="0.3">122.000</text>
<text x="1503" y="622.46" font-size="13" fill="#4a4d57" font-weight="normal" text-anchor="start" textLength="34.4" lengthAdjust="spacingAndGlyphs" stroke="#4a4d57" stroke-width="0.3">120.000</text>
<text x="1503" y="661.9800000000001" font-size="13" fill="#4a4d57" font-weight="normal" text-anchor="start" textLength="34.4" lengthAdjust="spacingAndGlyphs" stroke="#4a4d57" stroke-width="0.3">118.000</text>
<text x="1503" y="701.5000000000001" font-size="13" fill="#4a4d57" font-weight="normal" text-anchor="start" textLength="34.4" lengthAdjust="spacingAndGlyphs" stroke="#4a4d57" stroke-width="0.3">116.000</text>
<text x="1503" y="741.0200000000001" font-size="13" fill="#4a4d57" font-weight="normal" text-anchor="start" textLength="34.4" lengthAdjust="spacingAndGlyphs" stroke="#4a4d57" stroke-width="0.3">114.000</text>
<text x="1503" y="780.5400000000001" font-size="13" fill="#4a4d57" font-weight="normal" text-anchor="start" textLength="34.4" lengthAdjust="spacingAndGlyphs" stroke="#4a4d57" stroke-width="0.3">112.000</text>
<text x="1502" y="66.5" font-size="12.5" fill="#4a4d57" font-weight="normal" text-anchor="start" textLength="19" lengthAdjust="spacingAndGlyphs" stroke="#4a4d57" stroke-width="0.3">JPY</text>
<path d="M1521,62 l2.2,2.2 l2.2,-2.2" fill="none" stroke="#4a4d57" stroke-width="1.2"/>
<text x="1502" y="843.2" font-size="13" fill="#4a4d57" font-weight="normal" text-anchor="start" textLength="27.5" lengthAdjust="spacingAndGlyphs" stroke="#4a4d57" stroke-width="0.3">80.00</text>
<text x="1502" y="881.7" font-size="13" fill="#4a4d57" font-weight="normal" text-anchor="start" textLength="27.5" lengthAdjust="spacingAndGlyphs" stroke="#4a4d57" stroke-width="0.3">60.00</text>
<text x="1502" y="920.2" font-size="13" fill="#4a4d57" font-weight="normal" text-anchor="start" textLength="27.5" lengthAdjust="spacingAndGlyphs" stroke="#4a4d57" stroke-width="0.3">40.00</text>
<rect x="1493.5" y="122.7" width="50.0" height="18.999999999999986" rx="2" fill="#0b0bb5"/>
<text x="1503" y="137.0" font-size="13.5" fill="#ffffff" font-weight="bold" text-anchor="start" textLength="34.4" lengthAdjust="spacingAndGlyphs">144.608</text>
<rect x="1493.5" y="147.8" width="53.5" height="35.4" rx="2" fill="#26a69a"/>
<text x="1503" y="162.5" font-size="13.5" fill="#ffffff" font-weight="bold" text-anchor="start" textLength="34.4" lengthAdjust="spacingAndGlyphs">143.348</text>
<text x="1502" y="178.5" font-size="13.5" fill="#ffffff" font-weight="bold" text-anchor="start" textLength="39" lengthAdjust="spacingAndGlyphs">14:38:00</text>
<rect x="1493.5" y="184" width="50.0" height="18.19999999999999" rx="2" fill="#f00d0d"/>
<text x="1503" y="197.9" font-size="13.5" fill="#ffffff" font-weight="bold" text-anchor="start" textLength="34.4" lengthAdjust="spacingAndGlyphs">141.998</text>
<rect x="1493.5" y="238.5" width="50.0" height="17.899999999999977" rx="2" fill="#f57f17"/>
<text x="1503" y="252.25" font-size="13.5" fill="#ffffff" font-weight="bold" text-anchor="start" textLength="34.4" lengthAdjust="spacingAndGlyphs">138.749</text>
<rect x="1493.5" y="273.7" width="50.0" height="17.900000000000034" rx="2" fill="#f7ea5c"/>
<text x="1503" y="287.45" font-size="13.5" fill="#1e1e10" font-weight="bold" text-anchor="start" textLength="34.4" lengthAdjust="spacingAndGlyphs">136.959</text>
<rect x="1493.5" y="292.6" width="50.0" height="22.69999999999999" rx="2" fill="#131722"/>
<text x="1503" y="308.75000000000006" font-size="13.5" fill="#ffffff" font-weight="bold" text-anchor="start" textLength="34.4" lengthAdjust="spacingAndGlyphs">135.908</text>
<rect x="1475" y="292.6" width="17.5" height="22.7" fill="#131722"/>
<circle cx="1483.7" cy="304" r="6.2" fill="none" stroke="#ffffff" stroke-width="1.1"/>
<path d="M1480.5,304 h6.4 M1483.7,300.8 v6.4" stroke="#ffffff" stroke-width="1.1"/>
<rect x="1430" y="55.5" width="16" height="23" rx="3" fill="#ffffff" stroke="#eceef2" stroke-width="1"/>
<rect x="1451" y="55.5" width="16" height="23" rx="3" fill="#ffffff" stroke="#eceef2" stroke-width="1"/>
<rect x="1472" y="55.5" width="16" height="23" rx="3" fill="#ffffff" stroke="#eceef2" stroke-width="1"/>
<path d="M1438,61 v11 M1434.5,68.5 l3.5,3.5 l3.5,-3.5" fill="none" stroke="#4a4d57" stroke-width="1.2"/>
<path d="M1455.5,60 l3.5,3.5 l3.5,-3.5 M1455.5,74.5 l3.5,-3.5 l3.5,3.5" fill="none" stroke="#4a4d57" stroke-width="1.2"/>
<path d="M1475.5,63.5 v-2.5 h2.5 M1484.5,61 h2.5 v2.5 M1487,71 v2.5 h-2.5 M1478,73.5 h-2.5 v-2.5" fill="none" stroke="#4a4d57" stroke-width="1.3"/>
<text x="11" y="73.2" font-size="17" fill="#4e525c" font-weight="normal" text-anchor="start" textLength="162.4" lengthAdjust="spacingAndGlyphs" stroke="#4e525c" stroke-width="0.3">U.S. Dollar / Japanese Yen</text>
<text x="184.7" y="73.2" font-size="17" fill="#4e525c" font-weight="normal" text-anchor="start" textLength="15.3" lengthAdjust="spacingAndGlyphs" stroke="#4e525c" stroke-width="0.3">1D</text>
<text x="210" y="73.2" font-size="17" fill="#4e525c" font-weight="normal" text-anchor="start" textLength="32.6" lengthAdjust="spacingAndGlyphs" stroke="#4e525c" stroke-width="0.3">FXCM</text>
<text x="253.3" y="73.2" font-size="17" fill="#4e525c" font-weight="normal" text-anchor="start" textLength="73" lengthAdjust="spacingAndGlyphs" stroke="#4e525c" stroke-width="0.3">TradingView</text>
<ellipse cx="178" cy="68" rx="1.3" ry="1.5" fill="#b8bbc3"/>
<ellipse cx="204.5" cy="68" rx="1.3" ry="1.5" fill="#b8bbc3"/>
<ellipse cx="247.8" cy="68" rx="1.3" ry="1.5" fill="#b8bbc3"/>
<rect x="342" y="56.5" width="30.5" height="20.5" rx="9" fill="#f7c6da"/><path d="M351,56.5 h6 v20.5 h-6 a9,9 0 0 1 -9,-9 v-2.5 a9,9 0 0 1 9,-9 Z" fill="#e2f2ee"/>
<ellipse cx="349" cy="66.8" rx="2.6" ry="3.3" fill="#1f8f70"/>
<text x="364.5" y="71.5" font-size="13" fill="#d8407a" font-weight="bold" text-anchor="middle">≈</text>
<text x="387.2" y="73.2" font-size="13.5" fill="#50535e" font-weight="normal" text-anchor="start" textLength="6.1" lengthAdjust="spacingAndGlyphs" stroke="#50535e" stroke-width="0.3">O</text>
<text x="394.6" y="73.2" font-size="13.5" fill="#2f9a8a" font-weight="normal" text-anchor="start" textLength="40.3" lengthAdjust="spacingAndGlyphs" stroke="#2f9a8a" stroke-width="0.3">127.794</text>
<text x="439.8" y="73.2" font-size="13.5" fill="#50535e" font-weight="normal" text-anchor="start" textLength="6.9" lengthAdjust="spacingAndGlyphs" stroke="#50535e" stroke-width="0.3">H</text>
<text x="447.6" y="73.2" font-size="13.5" fill="#2f9a8a" font-weight="normal" text-anchor="start" textLength="38.7" lengthAdjust="spacingAndGlyphs" stroke="#2f9a8a" stroke-width="0.3">128.297</text>
<text x="492.4" y="73.2" font-size="13.5" fill="#50535e" font-weight="normal" text-anchor="start" textLength="4.9" lengthAdjust="spacingAndGlyphs" stroke="#50535e" stroke-width="0.3">L</text>
<text x="498.5" y="73.2" font-size="13.5" fill="#2f9a8a" font-weight="normal" text-anchor="start" textLength="38.6" lengthAdjust="spacingAndGlyphs" stroke="#2f9a8a" stroke-width="0.3">127.528</text>
<text x="542.5" y="73.2" font-size="13.5" fill="#50535e" font-weight="normal" text-anchor="start" textLength="6.5" lengthAdjust="spacingAndGlyphs" stroke="#50535e" stroke-width="0.3">C</text>
<text x="549.8" y="73.2" font-size="13.5" fill="#2f9a8a" font-weight="normal" text-anchor="start" textLength="39.2" lengthAdjust="spacingAndGlyphs" stroke="#2f9a8a" stroke-width="0.3">127.898</text>
<text x="595" y="73.2" font-size="13.5" fill="#2f9a8a" font-weight="normal" text-anchor="start" textLength="31.8" lengthAdjust="spacingAndGlyphs" stroke="#2f9a8a" stroke-width="0.3">+0.104</text>
<text x="630.5" y="73.2" font-size="13.5" fill="#2f9a8a" font-weight="normal" text-anchor="start" textLength="41.5" lengthAdjust="spacingAndGlyphs" stroke="#2f9a8a" stroke-width="0.3">(+0.08%)</text>
<rect x="10.5" y="85" width="51.5" height="26.5" rx="4" fill="#ffffff" stroke="#e39aa2" stroke-width="1.3"/>
<text x="18" y="103.3" font-size="13" fill="#e0525f" font-weight="normal" text-anchor="start" textLength="31" lengthAdjust="spacingAndGlyphs" stroke="#e0525f" stroke-width="0.3">143.34</text>
<text x="49.5" y="99" font-size="9" fill="#e0525f" font-weight="normal" text-anchor="start" textLength="5" lengthAdjust="spacingAndGlyphs" stroke="#e0525f" stroke-width="0.3">8</text>
<text x="68" y="102.5" font-size="12" fill="#5d606b" font-weight="normal" text-anchor="start" textLength="14" lengthAdjust="spacingAndGlyphs" stroke="#5d606b" stroke-width="0.3">0.3</text>
<rect x="89.5" y="85" width="51" height="26.5" rx="4" fill="#ffffff" stroke="#8a9ad8" stroke-width="1.3"/>
<text x="96.5" y="103.3" font-size="13" fill="#3b5cc7" font-weight="normal" text-anchor="start" textLength="31" lengthAdjust="spacingAndGlyphs" stroke="#3b5cc7" stroke-width="0.3">143.35</text>
<text x="128.5" y="99" font-size="9" fill="#3b5cc7" font-weight="normal" text-anchor="start" textLength="4" lengthAdjust="spacingAndGlyphs" stroke="#3b5cc7" stroke-width="0.3">1</text>
<rect x="9" y="122" width="109" height="19" fill="#ffffff" opacity="0.55"/>
<text x="11.6" y="135.5" font-size="13" fill="#50535e" font-weight="normal" text-anchor="start" textLength="57" lengthAdjust="spacingAndGlyphs" stroke="#50535e" stroke-width="0.3" opacity="0.9">EMA 9 close</text>
<text x="76.4" y="135.5" font-size="13" fill="#f4a261" font-weight="normal" text-anchor="start" textLength="38" lengthAdjust="spacingAndGlyphs" stroke="#f4a261" stroke-width="0.3">128.689</text>
<rect x="9" y="149" width="205" height="17" fill="#ffffff" opacity="0.85"/>
<text x="11.6" y="163.3" font-size="14" fill="#505460" font-weight="normal" text-anchor="start" textLength="64" lengthAdjust="spacingAndGlyphs" stroke="#505460" stroke-width="0.3">BB 20 close 2</text>
<text x="84.2" y="163.3" font-size="14" fill="#875656" font-weight="normal" text-anchor="start" textLength="38" lengthAdjust="spacingAndGlyphs" stroke="#875656" stroke-width="0.3">129.248</text>
<text x="128.2" y="163.3" font-size="14" fill="#3a9e93" font-weight="normal" text-anchor="start" textLength="38" lengthAdjust="spacingAndGlyphs" stroke="#3a9e93" stroke-width="0.3">131.338</text>
<text x="172.2" y="163.3" font-size="14" fill="#3a9e93" font-weight="normal" text-anchor="start" textLength="38.6" lengthAdjust="spacingAndGlyphs" stroke="#3a9e93" stroke-width="0.3">127.157</text>
<rect x="12" y="174" width="23" height="22" rx="3" fill="#ffffff" stroke="#e6e8ec" stroke-width="1"/>
<rect x="12.5" y="180.5" width="22" height="5" fill="#f9c9c9"/>
<path d="M20,188 l3.5,-3.5 l3.5,3.5" fill="none" stroke="#131722" stroke-width="1.5"/>
<text x="11.6" y="833.5" font-size="13" fill="#505460" font-weight="normal" text-anchor="start" textLength="57" lengthAdjust="spacingAndGlyphs" stroke="#505460" stroke-width="0.3">RSI 14 close</text>
<text x="77.2" y="833.5" font-size="13" fill="#e69138" font-weight="normal" text-anchor="start" textLength="26.2" lengthAdjust="spacingAndGlyphs" stroke="#e69138" stroke-width="0.3">49.57</text>
<ellipse cx="23.8" cy="922" rx="14" ry="18.3" fill="#ffffff" stroke="#ececf0" stroke-width="1"/>
<path d="M14.3,916 h9 v12.5 h-4.6 v-8 h-4.4 Z" fill="#131722"/><ellipse cx="25" cy="918.3" rx="1.6" ry="2" fill="#131722"/><path d="M27,916 h5.2 l-4.8,12.5 h-4.8 Z" fill="#131722"/>
<ellipse cx="1415.5" cy="767.7" rx="7.6" ry="10.6" fill="#ffffff" stroke="#f0a645" stroke-width="1.9"/>
<path d="M1409.5,763 h12 v10 a7,9 0 0 1 -12,0 Z" fill="#e8505a" opacity="0.9"/><rect x="1410" y="761" width="6.5" height="6" fill="#3a78d8"/><path d="M1409.5,765.5 h12 M1409.5,769 h12" stroke="#ffffff" stroke-width="1"/>
<ellipse cx="1437.5" cy="768.3" rx="7.6" ry="10.6" fill="#ffffff" stroke="#c83a5e" stroke-width="1.9"/>
<ellipse cx="1437.5" cy="768.3" rx="2.6" ry="3.3" fill="#e8243e"/>
<ellipse cx="1447" cy="793.6" rx="7.6" ry="10.6" fill="#ffffff" stroke="#f0a645" stroke-width="1.9"/>
<path d="M1446,789.5 h5 M1446,793.6 h5 M1446,797.7 h5" stroke="#e04058" stroke-width="1.6"/>
<ellipse cx="1439" cy="793.6" rx="7.6" ry="10.6" fill="#ffffff" stroke="#e06a50" stroke-width="1.9"/>
<path d="M1438,789.5 h5 M1438,793.6 h5 M1438,797.7 h5" stroke="#e04058" stroke-width="1.6"/>
<ellipse cx="1431.1" cy="793.6" rx="7.6" ry="10.6" fill="#ffffff" stroke="#c83a5e" stroke-width="1.9"/>
<path d="M1430.1,789.5 h5 M1430.1,793.6 h5 M1430.1,797.7 h5" stroke="#e04058" stroke-width="1.6"/>
<ellipse cx="1423.8" cy="793.6" rx="7.6" ry="10.6" fill="#ffffff" stroke="#c83a5e" stroke-width="1.9"/>
<path d="M1422.8,789.5 h5 M1422.8,793.6 h5 M1422.8,797.7 h5" stroke="#e04058" stroke-width="1.6"/>
<ellipse cx="1415" cy="793.6" rx="7.6" ry="10.6" fill="#ffffff" stroke="#c83a5e" stroke-width="1.9"/>
<ellipse cx="1415" cy="793.6" rx="2.6" ry="3.3" fill="#e8243e"/>
<text x="56.8" y="968" font-size="14.5" fill="#4a4d57" font-weight="bold" text-anchor="middle" textLength="20" lengthAdjust="spacingAndGlyphs">2022</text>
<text x="130" y="968" font-size="14.5" fill="#4a4d57" font-weight="normal" text-anchor="middle" textLength="11" lengthAdjust="spacingAndGlyphs" stroke="#4a4d57" stroke-width="0.3">17</text>
<text x="210.8" y="968" font-size="14.5" fill="#4a4d57" font-weight="normal" text-anchor="middle" textLength="18" lengthAdjust="spacingAndGlyphs" stroke="#4a4d57" stroke-width="0.3">Feb</text>
<text x="284.5" y="968" font-size="14.5" fill="#4a4d57" font-weight="normal" text-anchor="middle" textLength="11" lengthAdjust="spacingAndGlyphs" stroke="#4a4d57" stroke-width="0.3">15</text>
<text x="357.5" y="968" font-size="14.5" fill="#4a4d57" font-weight="normal" text-anchor="middle" textLength="19" lengthAdjust="spacingAndGlyphs" stroke="#4a4d57" stroke-width="0.3">Mar</text>
<text x="431.2" y="968" font-size="14.5" fill="#4a4d57" font-weight="normal" text-anchor="middle" textLength="11" lengthAdjust="spacingAndGlyphs" stroke="#4a4d57" stroke-width="0.3">15</text>
<text x="527" y="968" font-size="14.5" fill="#4a4d57" font-weight="normal" text-anchor="middle" textLength="18" lengthAdjust="spacingAndGlyphs" stroke="#4a4d57" stroke-width="0.3">Apr</text>
<text x="607.5" y="968" font-size="14.5" fill="#4a4d57" font-weight="normal" text-anchor="middle" textLength="11" lengthAdjust="spacingAndGlyphs" stroke="#4a4d57" stroke-width="0.3">18</text>
<text x="680.5" y="968" font-size="14.5" fill="#4a4d57" font-weight="normal" text-anchor="middle" textLength="21" lengthAdjust="spacingAndGlyphs" stroke="#4a4d57" stroke-width="0.3">May</text>
<text x="842.8" y="968" font-size="14.5" fill="#4a4d57" font-weight="normal" text-anchor="middle" textLength="17" lengthAdjust="spacingAndGlyphs" stroke="#4a4d57" stroke-width="0.3">Jun</text>
<text x="915.7" y="968" font-size="14.5" fill="#4a4d57" font-weight="normal" text-anchor="middle" textLength="11" lengthAdjust="spacingAndGlyphs" stroke="#4a4d57" stroke-width="0.3">15</text>
<text x="1004.3" y="968" font-size="14.5" fill="#4a4d57" font-weight="normal" text-anchor="middle" textLength="14" lengthAdjust="spacingAndGlyphs" stroke="#4a4d57" stroke-width="0.3">Jul</text>
<text x="1085" y="968" font-size="14.5" fill="#4a4d57" font-weight="normal" text-anchor="middle" textLength="11" lengthAdjust="spacingAndGlyphs" stroke="#4a4d57" stroke-width="0.3">18</text>
<text x="1158.5" y="968" font-size="14.5" fill="#4a4d57" font-weight="normal" text-anchor="middle" textLength="19" lengthAdjust="spacingAndGlyphs" stroke="#4a4d57" stroke-width="0.3">Aug</text>
<text x="1231.5" y="968" font-size="14.5" fill="#4a4d57" font-weight="normal" text-anchor="middle" textLength="11" lengthAdjust="spacingAndGlyphs" stroke="#4a4d57" stroke-width="0.3">15</text>
<text x="1327" y="968" font-size="14.5" fill="#4a4d57" font-weight="normal" text-anchor="middle" textLength="19" lengthAdjust="spacingAndGlyphs" stroke="#4a4d57" stroke-width="0.3">Sep</text>
<text x="1415.5" y="968" font-size="14.5" fill="#4a4d57" font-weight="normal" text-anchor="middle" textLength="11" lengthAdjust="spacingAndGlyphs" stroke="#4a4d57" stroke-width="0.3">19</text>
<text x="752" y="968" font-size="13.5" fill="#4a4d57" font-weight="normal" text-anchor="start" textLength="5" lengthAdjust="spacingAndGlyphs" stroke="#4a4d57" stroke-width="0.3">1</text>
<rect x="752.8" y="947.4" width="61.7" height="27" rx="2" fill="#131722"/>
<text x="783.6" y="968.2" font-size="13.5" fill="#ffffff" font-weight="bold" text-anchor="middle" textLength="52" lengthAdjust="spacingAndGlyphs">20 May '22</text>
<g transform="translate(1522,963.6)" fill="none" stroke="#131722" stroke-width="1.3"><circle r="5.5"/><line x1="0" y1="-6" x2="0" y2="-8.3" transform="rotate(0)"/><line x1="0" y1="-6" x2="0" y2="-8.3" transform="rotate(45)"/><line x1="0" y1="-6" x2="0" y2="-8.3" transform="rotate(90)"/><line x1="0" y1="-6" x2="0" y2="-8.3" transform="rotate(135)"/><line x1="0" y1="-6" x2="0" y2="-8.3" transform="rotate(180)"/><line x1="0" y1="-6" x2="0" y2="-8.3" transform="rotate(225)"/><line x1="0" y1="-6" x2="0" y2="-8.3" transform="rotate(270)"/><line x1="0" y1="-6" x2="0" y2="-8.3" transform="rotate(315)"/></g>
<rect x="0" y="0" width="1554" height="42" fill="#ffffff"/>
<ellipse cx="20" cy="13.5" rx="4" ry="3.5" fill="#4a8ad8"/><ellipse cx="14.7" cy="24" rx="2.6" ry="3.6" fill="#d83a4a"/><rect x="22.5" y="15.5" width="3" height="2.5" fill="#d83a4a"/><rect x="21.5" y="21" width="2.6" height="2.6" fill="#c04050"/>
<text x="31" y="27.6" font-size="16" fill="#3346b9" font-weight="bold" text-anchor="start" textLength="42.6" lengthAdjust="spacingAndGlyphs">USDJPY</text>
<ellipse cx="104.4" cy="22" rx="8.2" ry="10.6" fill="none" stroke="#131722" stroke-width="1.3"/><path d="M99.8,22 h9.2 M104.4,17 v10" stroke="#131722" stroke-width="1.2"/>
<line x1="124.6" y1="8" x2="124.6" y2="36" stroke="#eceef2" stroke-width="1"/>
<line x1="164" y1="8" x2="164" y2="36" stroke="#eceef2" stroke-width="1"/>
<line x1="204" y1="8" x2="204" y2="36" stroke="#eceef2" stroke-width="1"/>
<line x1="335" y1="8" x2="335" y2="36" stroke="#eceef2" stroke-width="1"/>
<text x="142" y="27.6" font-size="16" fill="#131722" font-weight="normal" text-anchor="start" textLength="6.5" lengthAdjust="spacingAndGlyphs" stroke="#131722" stroke-width="0.3">D</text>
<path d="M180.5,10 v22 M189.5,13 v17" stroke="#131722" stroke-width="1.2"/><rect x="178.5" y="14" width="4" height="14" rx="1" fill="#ffffff" stroke="#131722" stroke-width="1.2"/><rect x="187.5" y="17" width="4" height="9" rx="1" fill="#ffffff" stroke="#131722" stroke-width="1.2"/>
<path d="M217,24 l5,-6 l4,3 l6,-7" fill="none" stroke="#131722" stroke-width="1.3"/><path d="M217.5,31.5 v-4 h3.5 v4 M222,31.5 v-6 h3.5 v6 M226.5,31.5 v-8 h4 v8 M216.5,31.5 h15" fill="none" stroke="#131722" stroke-width="1.2"/>
<text x="238" y="27.6" font-size="16" fill="#131722" font-weight="normal" text-anchor="start" textLength="53" lengthAdjust="spacingAndGlyphs" stroke="#131722" stroke-width="0.3">Indicators</text>
<g fill="none" stroke="#131722" stroke-width="1.2"><rect x="309" y="14.5" width="5.5" height="5.5" rx="1.8"/><rect x="317.5" y="14.5" width="5.5" height="5.5" rx="1.8"/><rect x="309" y="23" width="5.5" height="5.5" rx="1.8"/><rect x="317.5" y="23" width="5.5" height="5.5" rx="1.8"/></g>
<g transform="matrix(0.8,0,0,1,70.90,0)" fill="none" stroke="#131722" stroke-width="1.25"><path d="M362.1,24.0 A8,8 0 1 0 356.0,29.8"/><path d="M354.0,16.5 v5.5 h-3.5"/><path d="M345.9,17.5 a4.2,4.2 0 0 1 5.6,-5.4 M363.1,17.5 a4.2,4.2 0 0 0 -5.6,-5.4"/><path d="M361.5,25.5 v9 M357.0,30.0 h9"/></g>
<text x="369.6" y="27.6" font-size="16" fill="#131722" font-weight="normal" text-anchor="start" textLength="26" lengthAdjust="spacingAndGlyphs" stroke="#131722" stroke-width="0.3">Alert</text>
<g fill="none" stroke="#131722" stroke-width="1.2"><path d="M421,16.5 l-6,5.5 l6,5.5 Z"/><path d="M427,16.5 l-6,5.5 l6,5.5 Z"/></g>
<text x="434.8" y="27.6" font-size="16" fill="#131722" font-weight="normal" text-anchor="start" textLength="35.2" lengthAdjust="spacingAndGlyphs" stroke="#131722" stroke-width="0.3">Replay</text>
<defs><filter id="sh" x="-5%" y="-30%" width="110%" height="170%"><feDropShadow dx="0" dy="1.5" stdDeviation="1.8" flood-color="#000" flood-opacity="0.18"/></filter></defs>
<rect x="782" y="1.5" width="346.5" height="43.5" rx="4" fill="#ffffff" filter="url(#sh)"/>
<circle cx="790.5" cy="17.5" r="0.8" fill="#b2b5be"/><circle cx="795" cy="17.5" r="0.8" fill="#b2b5be"/>
<circle cx="790.5" cy="21.5" r="0.8" fill="#b2b5be"/><circle cx="795" cy="21.5" r="0.8" fill="#b2b5be"/>
<circle cx="790.5" cy="25.5" r="0.8" fill="#b2b5be"/><circle cx="795" cy="25.5" r="0.8" fill="#b2b5be"/>
<line x1="803.3" y1="3" x2="803.3" y2="43" stroke="#f0f1f4" stroke-width="1"/>
<line x1="835.5" y1="3" x2="835.5" y2="43" stroke="#f0f1f4" stroke-width="1"/>
<line x1="871" y1="3" x2="871" y2="43" stroke="#f0f1f4" stroke-width="1"/>
<line x1="928" y1="3" x2="928" y2="43" stroke="#f0f1f4" stroke-width="1"/>
<line x1="963" y1="3" x2="963" y2="43" stroke="#f0f1f4" stroke-width="1"/>
<line x1="1093" y1="3" x2="1093" y2="43" stroke="#f0f1f4" stroke-width="1"/>
<g fill="none" stroke="#131722" stroke-width="1.2"><rect x="813" y="15" width="5" height="5" rx="1.5"/><rect x="821" y="15" width="5" height="5" rx="1.5"/><rect x="813" y="23" width="5" height="5" rx="1.5"/><path d="M820,25.5 h7 M823.5,22 v7"/></g>
<g fill="none" stroke="#131722" stroke-width="1.2"><path d="M847,28 l1,-4.5 l9,-9 l3.5,3.5 l-9,9 Z M855,16.5 l3.5,3.5"/></g>
<rect x="844" y="32" width="19" height="3.7" rx="1" fill="#f01010"/>
<rect x="878.5" y="20.5" width="15.5" height="4.5" rx="2" fill="#131722"/>
<text x="899.8" y="27.5" font-size="15" fill="#131722" font-weight="normal" text-anchor="start" textLength="19" lengthAdjust="spacingAndGlyphs" stroke="#131722" stroke-width="0.3">4px</text>
<line x1="937" y1="22.5" x2="954.5" y2="22.5" stroke="#131722" stroke-width="1.3"/>
<g transform="matrix(0.78,0,0,1.12,215.34,-2.74)"><path d="M988.87,21.17 L988.87,24.43 L986.85,24.37 L985.60,27.38 L987.07,28.77 L984.77,31.07 L983.38,29.60 L980.37,30.85 L980.43,32.87 L977.17,32.87 L977.23,30.85 L974.22,29.60 L972.83,31.07 L970.53,28.77 L972.00,27.38 L970.75,24.37 L968.73,24.43 L968.73,21.17 L970.75,21.23 L972.00,18.22 L970.53,16.83 L972.83,14.53 L974.22,16.00 L977.23,14.75 L977.17,12.73 L980.43,12.73 L980.37,14.75 L983.38,16.00 L984.77,14.53 L987.07,16.83 L985.60,18.22 L986.85,21.23 Z" fill="none" stroke="#131722" stroke-width="1.2" stroke-linejoin="round"/><circle cx="978.8" cy="22.8" r="2.6" fill="none" stroke="#131722" stroke-width="1.2"/></g>
<g transform="matrix(0.8,0,0,1,202.10,0)" fill="none" stroke="#131722" stroke-width="1.25"><path d="M1018.1,24.0 A8,8 0 1 0 1012.0,29.8"/><path d="M1010.0,16.5 v5.5 h-3.5"/><path d="M1001.9,17.5 a4.2,4.2 0 0 1 5.6,-5.4 M1019.1,17.5 a4.2,4.2 0 0 0 -5.6,-5.4"/><path d="M1017.5,25.5 v9 M1013.0,30.0 h9"/></g>
<g fill="none" stroke="#131722" stroke-width="1.2"><rect x="1038.5" y="21" width="13.5" height="11" rx="2"/><path d="M1041.5,21 v-4 a3.8,3.8 0 0 1 7.5,-1"/></g><rect x="1044.6" y="25" width="1.4" height="3" fill="#131722"/>
<g fill="none" stroke="#131722" stroke-width="1.2"><path d="M1071.5,15 h15 M1076,15 v-2.5 h6 v2.5"/><path d="M1073,15 v16.5 h11.5 v-16.5"/><path d="M1077,19 v9 M1080.5,19 v9"/></g>
<ellipse cx="1104.5" cy="23.3" rx="2.4" ry="3.1" fill="none" stroke="#131722" stroke-width="1.3"/>
<ellipse cx="1112" cy="23.3" rx="2.4" ry="3.1" fill="none" stroke="#131722" stroke-width="1.3"/>
<ellipse cx="1119.5" cy="23.3" rx="2.4" ry="3.1" fill="none" stroke="#131722" stroke-width="1.3"/>
<g fill="none" stroke="#131722" stroke-width="1.2"><path d="M1210.5,28 v-3 a4,4 0 0 0 -4,-4 h-7 M1202.5,17.5 l-3.5,3.5 l3.5,3.5"/></g>
<g fill="none" stroke="#c5c8cf" stroke-width="1.2"><path d="M1230.5,28 v-3 a4,4 0 0 1 4,-4 h7 M1238.5,17.5 l3.5,3.5 l-3.5,3.5"/></g>
<line x1="1257" y1="8" x2="1257" y2="36" stroke="#eceef2" stroke-width="1"/>
<rect x="1266" y="13" width="16" height="18" rx="2.5" fill="none" stroke="#131722" stroke-width="1.3"/>
<path d="M1295,30 a3.5,4.5 0 0 1 0,-8 a6,7 0 0 1 11.5,-2 a4.5,5.5 0 0 1 4,10 Z" fill="none" stroke="#131722" stroke-width="1.1" stroke-dasharray="2,1.5"/>
<text x="1316" y="27.7" font-size="15.5" fill="#131722" font-weight="normal" text-anchor="start" textLength="50.5" lengthAdjust="spacingAndGlyphs" stroke="#131722" stroke-width="0.3">Unnamed</text>
<path d="M1376,20.5 l3.5,3.5 l3.5,-3.5" fill="none" stroke="#131722" stroke-width="1.2"/>
<line x1="1392" y1="8" x2="1392" y2="36" stroke="#eceef2" stroke-width="1"/>
<ellipse cx="1410.5" cy="20" rx="6" ry="8" fill="none" stroke="#131722" stroke-width="1.3"/><path d="M1415,26 l4.5,6" stroke="#131722" stroke-width="1.4"/>
<g transform="matrix(0.78,0,0,1.12,317.68,-2.68)"><path d="M1454.07,20.67 L1454.07,23.93 L1452.05,23.87 L1450.80,26.88 L1452.27,28.27 L1449.97,30.57 L1448.58,29.10 L1445.57,30.35 L1445.63,32.37 L1442.37,32.37 L1442.43,30.35 L1439.42,29.10 L1438.03,30.57 L1435.73,28.27 L1437.20,26.88 L1435.95,23.87 L1433.93,23.93 L1433.93,20.67 L1435.95,20.73 L1437.20,17.72 L1435.73,16.33 L1438.03,14.03 L1439.42,15.50 L1442.43,14.25 L1442.37,12.23 L1445.63,12.23 L1445.57,14.25 L1448.58,15.50 L1449.97,14.03 L1452.27,16.33 L1450.80,17.72 L1452.05,20.73 Z" fill="none" stroke="#131722" stroke-width="1.25" stroke-linejoin="round"/><circle cx="1444" cy="22.3" r="2.6" fill="none" stroke="#131722" stroke-width="1.25"/></g>
<path d="M1469,17 v-4 h4 M1480,13 h4 v4 M1484,27 v4 h-4 M1473,31 h-4 v-4" fill="none" stroke="#131722" stroke-width="1.3"/>
<g fill="none" stroke="#131722" stroke-width="1.3"><path d="M1501,16 h4 l1.5,-2.5 h6 l1.5,2.5 h3.5 v14.5 h-16.5 Z"/><ellipse cx="1509.5" cy="23" rx="3.2" ry="4"/></g>
<rect x="1526.6" y="0" width="28" height="43.3" rx="2" fill="#2962ff"/>
<text x="1538" y="28" font-size="16" fill="#ffffff" font-weight="normal" text-anchor="start" textLength="17" lengthAdjust="spacingAndGlyphs" stroke="#ffffff" stroke-width="0.3">Pu</text>
</svg>
</body></html>
